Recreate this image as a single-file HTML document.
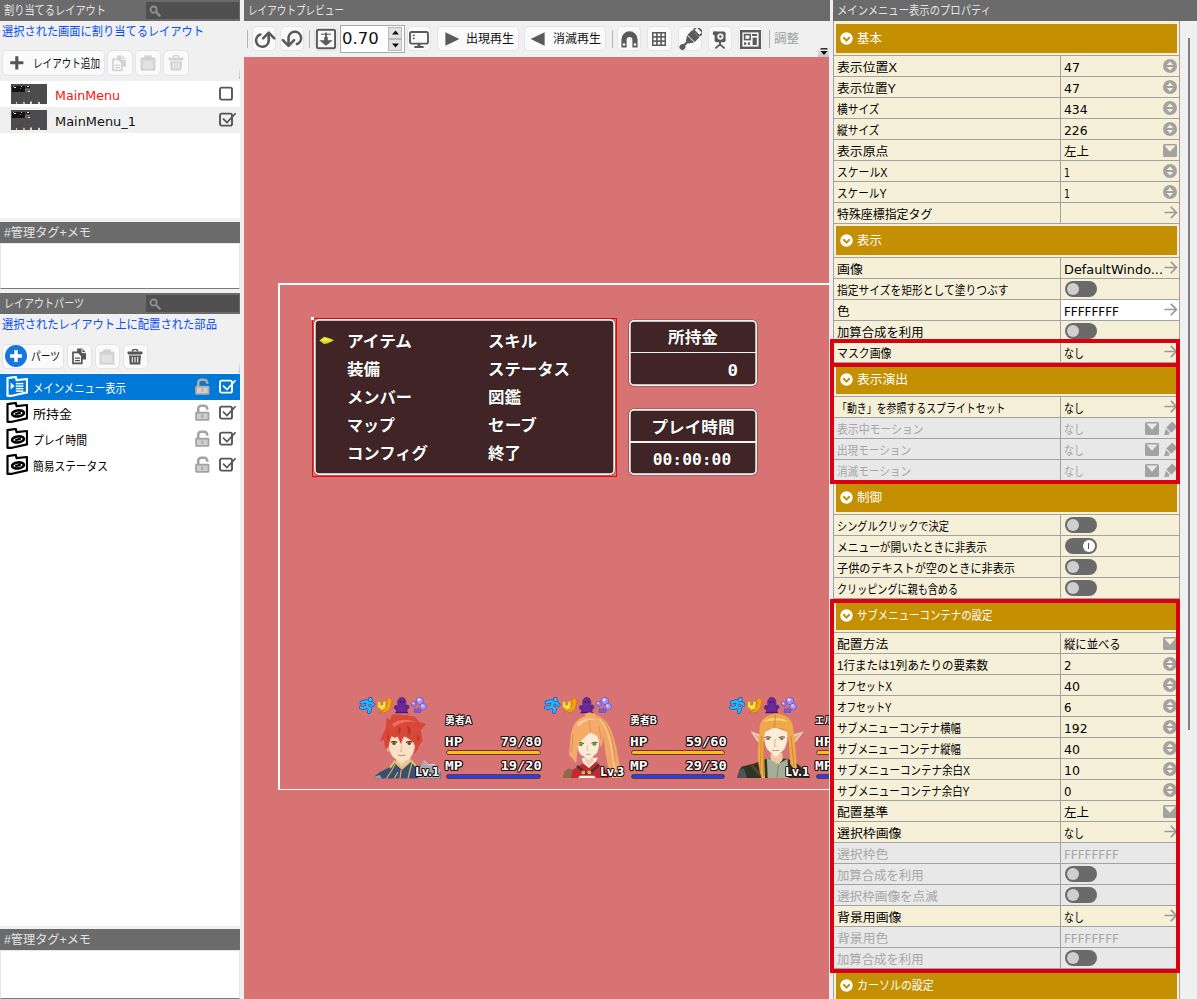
<!DOCTYPE html>
<html lang="ja"><head><meta charset="utf-8"><title>UI Layout Editor</title>
<style>
html,body{margin:0;padding:0}
body{width:1197px;height:999px;overflow:hidden;background:#f0f0f0;position:relative;font-family:"Liberation Sans","Noto Sans CJK JP",sans-serif;font-size:12px}
.r{position:absolute;display:block;box-sizing:border-box}
.t{position:absolute;display:block;white-space:nowrap;margin:0;padding:0}
.btn{position:absolute;box-sizing:border-box;background:#fafafa;border:1px solid #e4e4e4;border-radius:5px}
.clip{position:absolute;overflow:hidden}
</style></head>
<body>
<div class="r" style="left:0px;top:0px;width:240px;height:21px;background:#6b6b6b;"></div>
<span class="t" id="t0" style="top:1.3px;height:21px;line-height:21px;font-size:12px;color:#e4e4e4;left:4px;transform:scaleX(0.8499);transform-origin:0 50%;">割り当てるレイアウト</span>
<div class="r" style="left:146px;top:2px;width:93px;height:17px;background:#505050;"></div>
<svg class="r" style="left:148.5px;top:4.6px;" width="12" height="12" viewBox="0 0 12 12"><circle cx="4.6" cy="4.6" r="3.1" fill="none" stroke="#8e8e8e" stroke-width="1.8"/><path d="M7 7L10.6 10.6" stroke="#8e8e8e" stroke-width="2.2" stroke-linecap="round"/></svg>
<span class="t" id="t1" style="top:22.3px;height:21px;line-height:21px;font-size:12.5px;color:#0a50f0;left:2px;transform:scaleX(0.8977);transform-origin:0 50%;">選択された画面に割り当てるレイアウト</span>
<div class="btn" style="left:1.5px;top:50px;width:103.5px;height:26px"></div>
<svg class="r" style="left:10px;top:56px;" width="14" height="14" viewBox="0 0 14 14"><path d="M6.8 0.2V13.4M0.2 6.8H13.4" stroke="#555" stroke-width="3.1"/></svg>
<span class="t" id="t2" style="top:51.3px;height:26px;line-height:26px;font-size:12px;color:#111;left:33px;transform:scaleX(0.7975);transform-origin:0 50%;">レイアウト追加</span>
<div class="btn" style="left:107px;top:50px;width:26px;height:26px"></div>
<div class="btn" style="left:135px;top:50px;width:26px;height:26px"></div>
<div class="btn" style="left:163px;top:50px;width:26px;height:26px"></div>
<svg class="r" style="left:112px;top:55px;" width="15" height="17" viewBox="0 0 15 17"><path d="M5.2 0.6H10.2L14 4.4V11.4H5.2Z" fill="#d2d2d2"/><path d="M10 0.8V4.6H13.8" fill="none" stroke="#fafafa" stroke-width="1"/><path d="M1 4.4H6.6L9.8 7.6V15.4H1Z" fill="#fafafa" stroke="#d2d2d2" stroke-width="1.7"/><path d="M3 10.2H8M3 12.6H8" stroke="#d2d2d2" stroke-width="1.2"/></svg>
<svg class="r" style="left:140px;top:55px;" width="16" height="16" viewBox="0 0 16 16"><rect x="0.6" y="2.6" width="14.8" height="13" fill="#d2d2d2"/><rect x="4.2" y="0.4" width="7.6" height="4.4" fill="#d2d2d2"/><rect x="2.6" y="5.6" width="10.8" height="8.2" fill="#e2e2e2"/></svg>
<svg class="r" style="left:168px;top:55px;" width="16" height="16" viewBox="0 0 16 16"><path d="M5.4 2.2A2.6 2 0 0 1 10.6 2.2" fill="none" stroke="#d2d2d2" stroke-width="1.6"/><rect x="0.6" y="2.4" width="14.8" height="3" rx="0.8" fill="#d2d2d2"/><path d="M2 6.4H14L13.2 15.6H2.8Z" fill="#d2d2d2"/><path d="M5.3 8V13.6M8 8V13.6M10.7 8V13.6" stroke="#fafafa" stroke-width="1.1"/></svg>
<div class="r" style="left:239px;top:68px;width:1px;height:11px;background:linear-gradient(#ececec,#bdbdbd);"></div>
<div class="r" style="left:0px;top:81px;width:240px;height:137px;background:#fff;"></div>
<div class="r" style="left:0px;top:107px;width:240px;height:26px;background:#f0f0f0;"></div>
<div class="r" style="left:11px;top:84px;width:36px;height:20px;background:#4c4c4c;"></div><div class="r" style="left:12.4px;top:85.8px;width:12.2px;height:6px;background:#151213;"></div><div class="r" style="left:13.8px;top:86.8px;width:2px;height:1.2px;background:#e8e8e8;"></div><div class="r" style="left:12.8px;top:86px;width:1px;height:1px;background:#b8b820;"></div><div class="r" style="left:20.6px;top:86.2px;width:1.4px;height:1px;background:#c8c8c8;"></div><div class="r" style="left:19.6px;top:88.2px;width:1.2px;height:1px;background:#6a6a6a;"></div><div class="r" style="left:25.6px;top:85.8px;width:4.2px;height:2.2px;background:#151213;"></div><div class="r" style="left:26.6px;top:86px;width:2.2px;height:1px;background:#f0f0f0;"></div><div class="r" style="left:25.4px;top:88.6px;width:5px;height:3.4px;background:#565656;border:0.5px solid #6e6e6e;"></div><div class="r" style="left:28.4px;top:90.6px;width:1.6px;height:1px;background:#d8d8d8;"></div><div class="r" style="left:15.1px;top:100.8px;width:1.8px;height:1px;background:#a02848;"></div><div class="r" style="left:15.6px;top:101.8px;width:1.4px;height:2.2px;background:#f4dcc0;opacity:.85;"></div><div class="r" style="left:22.1px;top:100.8px;width:2.6px;height:1px;background:#3858a8;"></div><div class="r" style="left:22.6px;top:101.8px;width:2.2px;height:2.2px;background:#f0b898;opacity:.85;"></div><div class="r" style="left:29.9px;top:100.8px;width:1.8px;height:1px;background:#c89038;"></div><div class="r" style="left:30.4px;top:101.8px;width:1.4px;height:2.2px;background:#f8f0e4;opacity:.85;"></div><div class="r" style="left:37.1px;top:100.8px;width:2.8px;height:1px;background:#6848b0;"></div><div class="r" style="left:37.6px;top:101.8px;width:2.4px;height:2.2px;background:#f0ece0;opacity:.85;"></div>
<div class="r" style="left:11px;top:110px;width:36px;height:20px;background:#4c4c4c;"></div><div class="r" style="left:12.4px;top:111.8px;width:12.2px;height:6px;background:#151213;"></div><div class="r" style="left:13.8px;top:112.8px;width:2px;height:1.2px;background:#e8e8e8;"></div><div class="r" style="left:12.8px;top:112px;width:1px;height:1px;background:#b8b820;"></div><div class="r" style="left:20.6px;top:112.2px;width:1.4px;height:1px;background:#c8c8c8;"></div><div class="r" style="left:19.6px;top:114.2px;width:1.2px;height:1px;background:#6a6a6a;"></div><div class="r" style="left:25.6px;top:111.8px;width:4.2px;height:2.2px;background:#151213;"></div><div class="r" style="left:26.6px;top:112px;width:2.2px;height:1px;background:#f0f0f0;"></div><div class="r" style="left:25.4px;top:114.6px;width:5px;height:3.4px;background:#565656;border:0.5px solid #6e6e6e;"></div><div class="r" style="left:28.4px;top:116.6px;width:1.6px;height:1px;background:#d8d8d8;"></div><div class="r" style="left:15.1px;top:126.8px;width:1.8px;height:1px;background:#a02848;"></div><div class="r" style="left:15.6px;top:127.8px;width:1.4px;height:2.2px;background:#f4dcc0;opacity:.85;"></div><div class="r" style="left:22.1px;top:126.8px;width:2.6px;height:1px;background:#3858a8;"></div><div class="r" style="left:22.6px;top:127.8px;width:2.2px;height:2.2px;background:#f0b898;opacity:.85;"></div><div class="r" style="left:29.9px;top:126.8px;width:1.8px;height:1px;background:#c89038;"></div><div class="r" style="left:30.4px;top:127.8px;width:1.4px;height:2.2px;background:#f8f0e4;opacity:.85;"></div><div class="r" style="left:37.1px;top:126.8px;width:2.8px;height:1px;background:#6848b0;"></div><div class="r" style="left:37.6px;top:127.8px;width:2.4px;height:2.2px;background:#f0ece0;opacity:.85;"></div>
<span class="t" id="t3" style="top:82px;height:27px;line-height:27px;font-size:12.5px;color:#ff1010;font-family:'DejaVu Sans','Noto Sans CJK JP',sans-serif;left:55px;transform:scaleX(1.0129);transform-origin:0 50%;">MainMenu</span>
<span class="t" id="t4" style="top:108px;height:27px;line-height:27px;font-size:12.5px;color:#111;font-family:'DejaVu Sans','Noto Sans CJK JP',sans-serif;left:55px;transform:scaleX(1.0335);transform-origin:0 50%;">MainMenu_1</span>
<svg class="r" style="left:219px;top:86.3px;" width="18" height="15" viewBox="0 0 18 15"><rect x="1" y="1.6" width="12" height="12" rx="1.6" fill="none" stroke="#555" stroke-width="1.9"/></svg>
<svg class="r" style="left:219px;top:112.3px;" width="18" height="15" viewBox="0 0 18 15"><rect x="1" y="1.6" width="12" height="12" rx="1.6" fill="none" stroke="#555" stroke-width="1.9"/><path d="M4 6.6L8 10.6L16.6 1.2" fill="none" stroke="#555" stroke-width="1.7"/></svg>
<div class="r" style="left:0px;top:222px;width:240px;height:21px;background:#6b6b6b;"></div>
<span class="t" id="t5" style="top:223.3px;height:21px;line-height:21px;font-size:12px;color:#e4e4e4;left:4px;transform:scaleX(1.0153);transform-origin:0 50%;">#管理タグ+メモ</span>
<div class="r" style="left:0px;top:243px;width:240px;height:46px;background:#fff;border:1px solid #e6e6e6;border-bottom:1px solid #7a7a7a;"></div>
<div class="r" style="left:0px;top:293px;width:240px;height:21px;background:#6b6b6b;"></div>
<span class="t" id="t6" style="top:294.3px;height:21px;line-height:21px;font-size:12px;color:#e4e4e4;left:4px;transform:scaleX(0.8354);transform-origin:0 50%;">レイアウトパーツ</span>
<div class="r" style="left:146px;top:295px;width:93px;height:17px;background:#505050;"></div>
<svg class="r" style="left:148.5px;top:297.6px;" width="12" height="12" viewBox="0 0 12 12"><circle cx="4.6" cy="4.6" r="3.1" fill="none" stroke="#8e8e8e" stroke-width="1.8"/><path d="M7 7L10.6 10.6" stroke="#8e8e8e" stroke-width="2.2" stroke-linecap="round"/></svg>
<span class="t" id="t7" style="top:315.3px;height:21px;line-height:21px;font-size:12.5px;color:#0a50f0;left:2px;transform:scaleX(0.9052);transform-origin:0 50%;">選択されたレイアウト上に配置された部品</span>
<div class="btn" style="left:1.5px;top:343.5px;width:62px;height:25.5px"></div>
<svg class="r" style="left:5px;top:345px;" width="22" height="22" viewBox="0 0 22 22"><circle cx="11" cy="11" r="11" fill="#1478e0"/><path d="M11 5V17M5 11H17" stroke="#fff" stroke-width="3.4"/></svg>
<span class="t" id="t8" style="top:345.3px;height:25px;line-height:25px;font-size:12px;color:#111;left:31px;transform:scaleX(0.8108);transform-origin:0 50%;">パーツ</span>
<div class="btn" style="left:67px;top:344px;width:25px;height:25px"></div>
<div class="btn" style="left:95px;top:344px;width:25px;height:25px"></div>
<div class="btn" style="left:123px;top:344px;width:25px;height:25px"></div>
<svg class="r" style="left:71.5px;top:348px;" width="15" height="17" viewBox="0 0 15 17"><path d="M5.2 0.6H10.2L14 4.4V11.4H5.2Z" fill="#555"/><path d="M10 0.8V4.6H13.8" fill="none" stroke="#fafafa" stroke-width="1"/><path d="M1 4.4H6.6L9.8 7.6V15.4H1Z" fill="#fafafa" stroke="#555" stroke-width="1.7"/><path d="M3 10.2H8M3 12.6H8" stroke="#555" stroke-width="1.2"/></svg>
<svg class="r" style="left:99px;top:348.5px;" width="16" height="16" viewBox="0 0 16 16"><rect x="0.6" y="2.6" width="14.8" height="13" fill="#d2d2d2"/><rect x="4.2" y="0.4" width="7.6" height="4.4" fill="#d2d2d2"/><rect x="2.6" y="5.6" width="10.8" height="8.2" fill="#e2e2e2"/></svg>
<svg class="r" style="left:127px;top:348.5px;" width="16" height="16" viewBox="0 0 16 16"><path d="M5.4 2.2A2.6 2 0 0 1 10.6 2.2" fill="none" stroke="#555" stroke-width="1.6"/><rect x="0.6" y="2.4" width="14.8" height="3" rx="0.8" fill="#555"/><path d="M2 6.4H14L13.2 15.6H2.8Z" fill="#555"/><path d="M5.3 8V13.6M8 8V13.6M10.7 8V13.6" stroke="#fafafa" stroke-width="1.1"/></svg>
<div class="r" style="left:239px;top:362px;width:1px;height:11px;background:linear-gradient(#ececec,#bdbdbd);"></div>
<div class="r" style="left:0px;top:373px;width:240px;height:553px;background:#fff;"></div>
<div class="r" style="left:0px;top:374px;width:240px;height:26px;background:#0078d7;"></div>
<svg class="r" style="left:6px;top:376px;" width="22" height="21" viewBox="0 0 22 21"><path d="M1.5 2.2L9.8 0.9L10.6 4.2L21 3V16.4L6 19.8H1.5Z" fill="none" stroke="#fff" stroke-width="2.2" stroke-linejoin="round"/><path d="M4.6 6.6V13.6L8.6 10.1Z" fill="#fff"/><path d="M9.8 7.6 H17.4" stroke="#fff" stroke-width="1.5"/><path d="M9.8 10.1 H17.4" stroke="#fff" stroke-width="1.5"/><path d="M9.8 12.6 H17.4" stroke="#fff" stroke-width="1.5"/><path d="M9.8 15.1 H17.4" stroke="#fff" stroke-width="1.5"/></svg>
<span class="t" id="t9" style="top:376.3px;height:26px;line-height:26px;font-size:12.5px;color:#fff;left:33px;transform:scaleX(0.8293);transform-origin:0 50%;">メインメニュー表示</span>
<svg class="r" style="left:194.6px;top:377.6px;" width="15" height="18" viewBox="0 0 15 18"><path d="M3.2 8V4.8A3 3 0 0 1 6.2 1.8H9.2A3 3 0 0 1 12.2 4.8V5.8" fill="none" stroke="#b4aaa2" stroke-width="2.6"/><rect x="0.2" y="7.8" width="14.2" height="9" rx="1.2" fill="#b4aaa2"/><rect x="2" y="9.6" width="10.6" height="5.4" fill="#cfcfcf"/><rect x="6.4" y="10.6" width="1.8" height="3.2" fill="#b4aaa2"/></svg>
<svg class="r" style="left:219px;top:378.8px;" width="18" height="15" viewBox="0 0 18 15"><rect x="1" y="1.6" width="12" height="12" rx="1.6" fill="none" stroke="#fff" stroke-width="1.9"/><path d="M4 6.6L8 10.6L16.6 1.2" fill="none" stroke="#fff" stroke-width="1.7"/></svg>
<svg class="r" style="left:6px;top:402px;" width="22" height="21" viewBox="0 0 22 21"><path d="M1.5 2.2L9.8 0.9L10.6 4.2L21 3V16.4L6 19.8H1.5Z" fill="none" stroke="#000" stroke-width="2.2" stroke-linejoin="round"/><ellipse cx="12" cy="11.4" rx="6" ry="3" fill="none" stroke="#000" stroke-width="2.6" transform="rotate(-7 12 11.4)"/><path d="M9.2 12.2L14.8 10.6" stroke="#000" stroke-width="2.2"/></svg>
<span class="t" id="t10" style="top:402.3px;height:26px;line-height:26px;font-size:12.5px;color:#000;left:33px;transform:scaleX(1.0396);transform-origin:0 50%;">所持金</span>
<svg class="r" style="left:194.6px;top:403.6px;" width="15" height="18" viewBox="0 0 15 18"><path d="M3.2 8V4.8A3 3 0 0 1 6.2 1.8H9.2A3 3 0 0 1 12.2 4.8V5.8" fill="none" stroke="#a3a3a3" stroke-width="2.6"/><rect x="0.2" y="7.8" width="14.2" height="9" rx="1.2" fill="#a3a3a3"/><rect x="2" y="9.6" width="10.6" height="5.4" fill="#cfcfcf"/><rect x="6.4" y="10.6" width="1.8" height="3.2" fill="#a3a3a3"/></svg>
<svg class="r" style="left:219px;top:404.8px;" width="18" height="15" viewBox="0 0 18 15"><rect x="1" y="1.6" width="12" height="12" rx="1.6" fill="none" stroke="#555" stroke-width="1.9"/><path d="M4 6.6L8 10.6L16.6 1.2" fill="none" stroke="#555" stroke-width="1.7"/></svg>
<svg class="r" style="left:6px;top:428px;" width="22" height="21" viewBox="0 0 22 21"><path d="M1.5 2.2L9.8 0.9L10.6 4.2L21 3V16.4L6 19.8H1.5Z" fill="none" stroke="#000" stroke-width="2.2" stroke-linejoin="round"/><ellipse cx="12" cy="11.4" rx="6" ry="3" fill="none" stroke="#000" stroke-width="2.6" transform="rotate(-7 12 11.4)"/><path d="M9.2 12.2L14.8 10.6" stroke="#000" stroke-width="2.2"/></svg>
<span class="t" id="t11" style="top:428.3px;height:26px;line-height:26px;font-size:12.5px;color:#000;left:33px;transform:scaleX(0.8638);transform-origin:0 50%;">プレイ時間</span>
<svg class="r" style="left:194.6px;top:429.6px;" width="15" height="18" viewBox="0 0 15 18"><path d="M3.2 8V4.8A3 3 0 0 1 6.2 1.8H9.2A3 3 0 0 1 12.2 4.8V5.8" fill="none" stroke="#a3a3a3" stroke-width="2.6"/><rect x="0.2" y="7.8" width="14.2" height="9" rx="1.2" fill="#a3a3a3"/><rect x="2" y="9.6" width="10.6" height="5.4" fill="#cfcfcf"/><rect x="6.4" y="10.6" width="1.8" height="3.2" fill="#a3a3a3"/></svg>
<svg class="r" style="left:219px;top:430.8px;" width="18" height="15" viewBox="0 0 18 15"><rect x="1" y="1.6" width="12" height="12" rx="1.6" fill="none" stroke="#555" stroke-width="1.9"/><path d="M4 6.6L8 10.6L16.6 1.2" fill="none" stroke="#555" stroke-width="1.7"/></svg>
<svg class="r" style="left:6px;top:454px;" width="22" height="21" viewBox="0 0 22 21"><path d="M1.5 2.2L9.8 0.9L10.6 4.2L21 3V16.4L6 19.8H1.5Z" fill="none" stroke="#000" stroke-width="2.2" stroke-linejoin="round"/><ellipse cx="12" cy="11.4" rx="6" ry="3" fill="none" stroke="#000" stroke-width="2.6" transform="rotate(-7 12 11.4)"/><path d="M9.2 12.2L14.8 10.6" stroke="#000" stroke-width="2.2"/></svg>
<span class="t" id="t12" style="top:454.3px;height:26px;line-height:26px;font-size:12.5px;color:#000;left:33px;transform:scaleX(0.8570);transform-origin:0 50%;">簡易ステータス</span>
<svg class="r" style="left:194.6px;top:455.6px;" width="15" height="18" viewBox="0 0 15 18"><path d="M3.2 8V4.8A3 3 0 0 1 6.2 1.8H9.2A3 3 0 0 1 12.2 4.8V5.8" fill="none" stroke="#a3a3a3" stroke-width="2.6"/><rect x="0.2" y="7.8" width="14.2" height="9" rx="1.2" fill="#a3a3a3"/><rect x="2" y="9.6" width="10.6" height="5.4" fill="#cfcfcf"/><rect x="6.4" y="10.6" width="1.8" height="3.2" fill="#a3a3a3"/></svg>
<svg class="r" style="left:219px;top:456.8px;" width="18" height="15" viewBox="0 0 18 15"><rect x="1" y="1.6" width="12" height="12" rx="1.6" fill="none" stroke="#555" stroke-width="1.9"/><path d="M4 6.6L8 10.6L16.6 1.2" fill="none" stroke="#555" stroke-width="1.7"/></svg>
<div class="r" style="left:0px;top:929px;width:240px;height:21px;background:#6b6b6b;"></div>
<span class="t" id="t13" style="top:930.3px;height:21px;line-height:21px;font-size:12px;color:#e4e4e4;left:4px;transform:scaleX(1.0153);transform-origin:0 50%;">#管理タグ+メモ</span>
<div class="r" style="left:0px;top:950px;width:240px;height:49px;background:#fff;border:1px solid #e6e6e6;border-bottom:1px solid #7a7a7a;"></div><div class="r" style="left:244px;top:0px;width:586px;height:21px;background:#6b6b6b;"></div>
<span class="t" id="t14" style="top:1.3px;height:21px;line-height:21px;font-size:12px;color:#e4e4e4;left:248px;transform:scaleX(0.7999);transform-origin:0 50%;">レイアウトプレビュー</span>
<div class="r" style="left:247px;top:30px;width:1px;height:18px;background:#b4b4b4;"></div>
<div class="btn" style="left:252px;top:26px;width:24px;height:25px"></div>
<div class="btn" style="left:280px;top:26px;width:24px;height:25px"></div>
<svg class="r" style="left:250px;top:24px;" width="30" height="30" viewBox="250 24 30 30"><path d="M260.3 34.5A6.3 6.3 0 1 0 268.7 40.6V33.6" fill="none" stroke="#5a5a5a" stroke-width="2.6" stroke-linecap="round"/><path d="M263.1 38.3L268.7 32.7L274.3 38.3" fill="none" stroke="#5a5a5a" stroke-width="2.6" stroke-linecap="round" stroke-linejoin="round"/></svg>
<svg class="r" style="left:277px;top:23.2px;" width="30" height="30" viewBox="250.2 24.1 30 30"><g transform="rotate(180 265.2 39.8)"><path d="M260.3 34.5A6.3 6.3 0 1 0 268.7 40.6V33.6" fill="none" stroke="#5a5a5a" stroke-width="2.6" stroke-linecap="round"/><path d="M263.1 38.3L268.7 32.7L274.3 38.3" fill="none" stroke="#5a5a5a" stroke-width="2.6" stroke-linecap="round" stroke-linejoin="round"/></g></svg>
<div class="r" style="left:309px;top:30px;width:1px;height:18px;background:#b4b4b4;"></div>
<div class="btn" style="left:314px;top:26px;width:24px;height:25px"></div>
<svg class="r" style="left:315px;top:28px;" width="22" height="22" viewBox="315 28 22 22"><rect x="316.9" y="29.8" width="18.2" height="18.4" rx="1.6" fill="none" stroke="#5a5a5a" stroke-width="2"/><path d="M321 34.2H331" stroke="#5a5a5a" stroke-width="1.1"/><path d="M326 32.4V38" stroke="#5a5a5a" stroke-width="1.8"/><path d="M326 37V41" stroke="#5a5a5a" stroke-width="3.6"/><path d="M319.2 40.2H332.8L326 45.8Z" fill="#5a5a5a"/></svg>
<div class="r" style="left:340px;top:25px;width:65px;height:28px;background:#fff;border:1px solid #a8a8a8;"></div>
<span class="t" id="t15" style="top:25px;height:28px;line-height:28px;font-size:16.5px;color:#111;font-family:'DejaVu Sans','Noto Sans CJK JP',sans-serif;left:341.6px;transform:scaleX(0.9986);transform-origin:0 50%;">0.70</span>
<div class="r" style="left:388px;top:27px;width:14px;height:11.5px;background:#e2e2e2;border:1px solid #b8b8b8;"></div>
<div class="r" style="left:388px;top:39px;width:14px;height:11.5px;background:#e2e2e2;border:1px solid #b8b8b8;"></div>
<svg class="r" style="left:391.5px;top:30px;" width="7" height="5" viewBox="0 0 7 5"><path d="M0 4.6L3.5 0.4L7 4.6Z" fill="#111"/></svg>
<svg class="r" style="left:391.5px;top:42.5px;" width="7" height="5" viewBox="0 0 7 5"><path d="M0 0.4L3.5 4.6L7 0.4Z" fill="#111"/></svg>
<div class="btn" style="left:407px;top:26px;width:24px;height:25px"></div>
<svg class="r" style="left:409px;top:30.5px;" width="20" height="18" viewBox="0 0 20 18"><rect x="1" y="1" width="18" height="11.6" rx="1.6" fill="none" stroke="#5a5a5a" stroke-width="1.9"/><path d="M10 12.6V15" stroke="#5a5a5a" stroke-width="3"/><path d="M5.4 16H14.6" stroke="#5a5a5a" stroke-width="2"/><rect x="3.8" y="3.6" width="1.8" height="1.6" fill="#5a5a5a"/><rect x="3.8" y="6.6" width="1.8" height="1.6" fill="#5a5a5a"/></svg>
<div class="btn" style="left:436.5px;top:26px;width:82px;height:25px"></div>
<svg class="r" style="left:445px;top:32px;" width="15" height="14" viewBox="0 0 15 14"><path d="M0.4 0.2L14.4 7L0.4 13.8Z" fill="#5a5a5a"/></svg>
<span class="t" id="t16" style="top:27.3px;height:25px;line-height:25px;font-size:12px;color:#111;left:466px;transform:scaleX(0.9997);transform-origin:0 50%;">出現再生</span>
<div class="btn" style="left:523.5px;top:26px;width:82px;height:25px"></div>
<svg class="r" style="left:530px;top:32px;" width="15" height="14" viewBox="0 0 15 14"><path d="M14.6 0.2L0.6 7L14.6 13.8Z" fill="#5a5a5a"/></svg>
<span class="t" id="t17" style="top:27.3px;height:25px;line-height:25px;font-size:12px;color:#111;left:553px;transform:scaleX(0.9997);transform-origin:0 50%;">消滅再生</span>
<div class="r" style="left:612px;top:30px;width:1px;height:18px;background:#b4b4b4;"></div>
<div class="btn" style="left:616.5px;top:26px;width:24.5px;height:25px"></div>
<svg class="r" style="left:620.5px;top:30.5px;" width="17" height="17" viewBox="0 0 17 17"><path d="M0.4 16.4V8.4A8.1 8.1 0 0 1 16.6 8.4V16.4H11.4V9A2.9 2.9 0 0 0 5.6 9V16.4Z" fill="#5a5a5a"/><rect x="1.8" y="12.4" width="2.4" height="2.2" fill="#fafafa"/><rect x="12.8" y="12.4" width="2.4" height="2.2" fill="#fafafa"/></svg>
<div class="btn" style="left:647px;top:26px;width:24.5px;height:25px"></div>
<svg class="r" style="left:652px;top:32px;" width="14" height="14" viewBox="0 0 14 14"><rect x="0" y="0" width="14" height="14" fill="#5a5a5a"/><rect x="1.5" y="1.5" width="2.6" height="2.6" fill="#fafafa"/><rect x="1.5" y="5.7" width="2.6" height="2.6" fill="#fafafa"/><rect x="1.5" y="9.9" width="2.6" height="2.6" fill="#fafafa"/><rect x="5.7" y="1.5" width="2.6" height="2.6" fill="#fafafa"/><rect x="5.7" y="5.7" width="2.6" height="2.6" fill="#fafafa"/><rect x="5.7" y="9.9" width="2.6" height="2.6" fill="#fafafa"/><rect x="9.9" y="1.5" width="2.6" height="2.6" fill="#fafafa"/><rect x="9.9" y="5.7" width="2.6" height="2.6" fill="#fafafa"/><rect x="9.9" y="9.9" width="2.6" height="2.6" fill="#fafafa"/></svg>
<div class="btn" style="left:677.5px;top:26px;width:24.5px;height:25px"></div>
<svg class="r" style="left:679px;top:28px;" width="23" height="22" viewBox="0 0 23 22"><g transform="rotate(45 11.5 11)"><rect x="7.3" y="-2.4" width="8.4" height="5" rx="1.2" fill="none" stroke="#5a5a5a" stroke-width="1.7"/><rect x="6.4" y="3.4" width="10.2" height="6.6" fill="#5a5a5a"/><path d="M6.4 10.8H16.6L13.4 15.6H9.6Z" fill="#5a5a5a"/><path d="M11.5 15V21" stroke="#5a5a5a" stroke-width="2.2"/><circle cx="11.5" cy="22.4" r="2.9" fill="#5a5a5a"/></g></svg>
<div class="btn" style="left:707.5px;top:26px;width:24.5px;height:25px"></div>
<svg class="r" style="left:713px;top:30.5px;" width="13" height="18" viewBox="0 0 13 18"><rect x="1.6" y="0.4" width="11" height="10.8" rx="2" fill="#5a5a5a"/><rect x="0" y="0.4" width="3.6" height="3.6" fill="#5a5a5a"/><circle cx="7.4" cy="5.6" r="3.1" fill="#fafafa"/><circle cx="7.4" cy="5.6" r="1.3" fill="#5a5a5a"/><path d="M7 11V13.6M7 13.4L2.4 17.4M7 13.4L11.6 17.4" stroke="#5a5a5a" stroke-width="1.9" fill="none"/></svg>
<div class="btn" style="left:737.5px;top:26px;width:25px;height:25px"></div>
<svg class="r" style="left:740px;top:30px;" width="21" height="19" viewBox="0 0 21 19"><rect x="1.2" y="1.2" width="18.6" height="16.6" fill="none" stroke="#5a5a5a" stroke-width="2.4"/><rect x="4.6" y="4.6" width="5.6" height="5" fill="none" stroke="#5a5a5a" stroke-width="1.6"/><rect x="12" y="4" width="5" height="2" fill="#5a5a5a"/><rect x="12.6" y="7.6" width="4.2" height="7.4" fill="#5a5a5a"/><rect x="4" y="12.4" width="2.2" height="2.4" fill="#5a5a5a"/><rect x="7.8" y="12.4" width="2.2" height="2.4" fill="#5a5a5a"/></svg>
<div class="r" style="left:768.5px;top:30px;width:1px;height:18px;background:#b4b4b4;"></div>
<span class="t" id="t18" style="top:27.3px;height:25px;line-height:25px;font-size:12px;color:#a0a0a0;left:774px;transform:scaleX(1.0410);transform-origin:0 50%;">調整</span>
<div class="r" style="left:818px;top:46px;width:11px;height:11px;background:linear-gradient(#f4f4f4,#c4c4c4);"></div>
<svg class="r" style="left:820px;top:48px;" width="8" height="8" viewBox="0 0 8 8"><path d="M0.6 0.8H7.4" stroke="#111" stroke-width="1.3"/><path d="M0.4 3L4 7L7.6 3Z" fill="#111"/></svg>
<div class="clip" style="left:244px;top:57px;width:585px;height:942px;background:#d87373">
<div style="position:absolute;left:-244px;top:-57px;width:1197px;height:999px">
<div class="r" style="left:278px;top:283px;width:900px;height:507px;background:transparent;border:2px solid #fff;border-bottom-width:1.2px;"></div>
<div class="r" style="left:312px;top:318px;width:305px;height:158.6px;background:transparent;border:1px solid #f00;"></div>
<div class="r" style="left:311px;top:317px;width:3px;height:3px;background:#fff;"></div>
<div class="r" style="left:313.6px;top:319.4px;width:301.4px;height:155.8px;background:#402426;border-radius:5px;box-shadow:inset 0 0 0 1.7px #f6f6f6,0 0 0 0.6px rgba(60,30,30,.55)"></div>
<svg class="r" style="left:319px;top:336px;" width="16" height="9" viewBox="0 0 16 9"><path d="M0.4 4.4L5 0.8C9 1.6 12.4 3 14.8 4.4C12.4 5.8 9 7.4 5 8L0.4 4.4Z" fill="#d8dc20"/><path d="M2 4.4L5.4 2.2C8 2.6 10.4 3.4 12.4 4.4Z" fill="#f4f860"/></svg>
<span class="t" id="t19" style="top:329px;height:24px;line-height:24px;font-size:16.2px;color:#fff;font-family:'Liberation Sans','Noto Sans CJK JP',sans-serif;font-weight:700;left:346.6px;transform:scaleX(1.0294);transform-origin:0 50%;text-shadow:0 0 1px rgba(0,0,0,.7);">アイテム</span>
<span class="t" id="t20" style="top:357px;height:24px;line-height:24px;font-size:16.2px;color:#fff;font-family:'Liberation Sans','Noto Sans CJK JP',sans-serif;font-weight:700;left:346.6px;transform:scaleX(1.0193);transform-origin:0 50%;text-shadow:0 0 1px rgba(0,0,0,.7);">装備</span>
<span class="t" id="t21" style="top:385px;height:24px;line-height:24px;font-size:16.2px;color:#fff;font-family:'Liberation Sans','Noto Sans CJK JP',sans-serif;font-weight:700;left:346.6px;transform:scaleX(1.0039);transform-origin:0 50%;text-shadow:0 0 1px rgba(0,0,0,.7);">メンバー</span>
<span class="t" id="t22" style="top:413px;height:24px;line-height:24px;font-size:16.2px;color:#fff;font-family:'Liberation Sans','Noto Sans CJK JP',sans-serif;font-weight:700;left:346.6px;transform:scaleX(0.9884);transform-origin:0 50%;text-shadow:0 0 1px rgba(0,0,0,.7);">マップ</span>
<span class="t" id="t23" style="top:441px;height:24px;line-height:24px;font-size:16.2px;color:#fff;font-family:'Liberation Sans','Noto Sans CJK JP',sans-serif;font-weight:700;left:346.6px;transform:scaleX(1.0107);transform-origin:0 50%;text-shadow:0 0 1px rgba(0,0,0,.7);">コンフィグ</span>
<span class="t" id="t24" style="top:329px;height:24px;line-height:24px;font-size:16.2px;color:#fff;font-family:'Liberation Sans','Noto Sans CJK JP',sans-serif;font-weight:700;left:488px;transform:scaleX(1.0090);transform-origin:0 50%;text-shadow:0 0 1px rgba(0,0,0,.7);">スキル</span>
<span class="t" id="t25" style="top:357px;height:24px;line-height:24px;font-size:16.2px;color:#fff;font-family:'Liberation Sans','Noto Sans CJK JP',sans-serif;font-weight:700;left:488px;transform:scaleX(1.0131);transform-origin:0 50%;text-shadow:0 0 1px rgba(0,0,0,.7);">ステータス</span>
<span class="t" id="t26" style="top:385px;height:24px;line-height:24px;font-size:16.2px;color:#fff;font-family:'Liberation Sans','Noto Sans CJK JP',sans-serif;font-weight:700;left:488px;transform:scaleX(1.0193);transform-origin:0 50%;text-shadow:0 0 1px rgba(0,0,0,.7);">図鑑</span>
<span class="t" id="t27" style="top:413px;height:24px;line-height:24px;font-size:16.2px;color:#fff;font-family:'Liberation Sans','Noto Sans CJK JP',sans-serif;font-weight:700;left:488px;transform:scaleX(1.0295);transform-origin:0 50%;text-shadow:0 0 1px rgba(0,0,0,.7);">セーブ</span>
<span class="t" id="t28" style="top:441px;height:24px;line-height:24px;font-size:16.2px;color:#fff;font-family:'Liberation Sans','Noto Sans CJK JP',sans-serif;font-weight:700;left:488px;transform:scaleX(1.0193);transform-origin:0 50%;text-shadow:0 0 1px rgba(0,0,0,.7);">終了</span>
<div class="r" style="left:628.8px;top:319.6px;width:127.8px;height:66px;background:#402426;border-radius:5px;box-shadow:inset 0 0 0 1.7px #f6f6f6,0 0 0 0.6px rgba(60,30,30,.55)"></div><div class="r" style="left:629.8px;top:351.9px;width:125.8px;height:1.4px;background:#f4f4f4;"></div>
<span class="t" id="t29" style="top:325px;height:24px;line-height:24px;font-size:16.2px;color:#fff;font-family:'Liberation Sans','Noto Sans CJK JP',sans-serif;font-weight:700;left:692.5px;transform:translateX(-50%) scaleX(1.0296);text-shadow:0 0 1px rgba(0,0,0,.7);">所持金</span>
<span class="t" id="t30" style="top:359px;height:24px;line-height:24px;font-size:16.5px;color:#fff;font-family:'DejaVu Sans Mono','Liberation Mono',monospace;font-weight:700;right:459.5px;transform:scaleX(1.0566);transform-origin:100% 50%;text-shadow:0 0 1px rgba(0,0,0,.7);">0</span>
<div class="r" style="left:628.8px;top:408.8px;width:127.8px;height:66.4px;background:#402426;border-radius:5px;box-shadow:inset 0 0 0 1.7px #f6f6f6,0 0 0 0.6px rgba(60,30,30,.55)"></div><div class="r" style="left:629.8px;top:441.2px;width:125.8px;height:1.4px;background:#f4f4f4;"></div>
<span class="t" id="t31" style="top:414.5px;height:24px;line-height:24px;font-size:16.2px;color:#fff;font-family:'Liberation Sans','Noto Sans CJK JP',sans-serif;font-weight:700;left:692.5px;transform:translateX(-50%) scaleX(1.0255);text-shadow:0 0 1px rgba(0,0,0,.7);">プレイ時間</span>
<span class="t" id="t32" style="top:448.3px;height:24px;line-height:24px;font-size:16.5px;color:#fff;font-family:'DejaVu Sans Mono','Liberation Mono',monospace;font-weight:700;left:692.3px;transform:translateX(-50%) scaleX(0.9876);text-shadow:0 0 1px rgba(0,0,0,.7);">00:00:00</span>
<svg class="r" style="left:360.4px;top:697px;overflow:visible;" width="68" height="16.5" viewBox="0 0 68 16.5"><g stroke-linecap="round" stroke-linejoin="round" fill="none"><path d="M1.6 5.4L6.4 4.2L10.2 5.2L13.4 7.6M8.2 5L6.6 9.6L10 11.6L9 15M6.6 9.6L3.6 11L1 10.4" stroke="#0a58c8" stroke-width="4"/><path d="M1.6 5.4L6.4 4.2L10.2 5.2L13.4 7.6M8.2 5L6.6 9.6L10 11.6L9 15M6.6 9.6L3.6 11L1 10.4" stroke="#28b8f8" stroke-width="2.6"/></g><circle cx="10.4" cy="2.4" r="2.3" fill="#0a58c8"/><circle cx="10.4" cy="2.4" r="1.5" fill="#48d0ff"/><g transform="translate(16.8 0)"><path d="M2 15.4C8 14.6 10 10 10.4 5L8.6 5.2L12.4 0.2L16.2 5L14.6 4.8C14.6 11 12 15.6 5 16Z" fill="#f8a010" stroke="#c07008" stroke-width=".6"/><path d="M0.8 4.6H3.8V8H5.8L6.4 4.200H9.400L8.800 11.600L4.400 13.400L3 11.200L0.800 10.800Z" fill="#f8e040" stroke="#b89010" stroke-width=".6"/></g><g transform="translate(33.6 0)" fill="#6a2a98" stroke="#451870" stroke-width=".6"><circle cx="2.6" cy="10.400" r="1.9"/><circle cx="13.6" cy="10" r="1.9"/><path d="M3.2 15.400C2 12.600 4 10 4.400 8C3.200 3.600 5.200 0.400 8.200 0.400S13.200 3.600 12 8C12.400 10 14.400 12.600 13.200 15.400Z"/><path d="M1.800 15.600H14.400" stroke-width="1.3" stroke="#451870"/></g><circle cx="40.4" cy="5" r=".8" fill="#2a0c48"/><circle cx="43.2" cy="5" r=".8" fill="#2a0c48"/><g transform="translate(50.4 0)" stroke="#5a44c0" stroke-width=".6"><circle cx="9.600" cy="4" r="3.7" fill="#a48cf4"/><circle cx="12.800" cy="9.600" r="3.3" fill="#a890f8"/><circle cx="3.400" cy="7" r="2.5" fill="#9c84f0"/><path d="M3.600 15.400L4.200 11.400L6.200 13.200L7.600 10.800L9 13.200L10.600 12L10.400 15.400Z" fill="#7c5ce0"/></g><circle cx="59" cy="2.800" r="1.5" fill="#ece4ff"/><circle cx="62.400" cy="8.600" r="1.2" fill="#e4dcff"/><circle cx="53.200" cy="6.200" r=".9" fill="#e4dcff"/></svg><svg class="r" style="left:374px;top:712px;overflow:visible;" width="67" height="66.4" viewBox="0 0 67 66.4"><defs><clipPath id="fc0"><rect x="-10" y="-2" width="90" height="68.400"/></clipPath></defs><g clip-path="url(#fc0)"><path d="M0 67L1 64L6 60L14 56L21 51L28 58L37 50L44 54L50 53L67 60V67Z" fill="#3a4e74"/><path d="M0 67L1 64.500L6 63L8 67Z" fill="#9aa0a8"/><path d="M46 55L50 48.500L54 53L61 52.500L66.500 58V67H44Z" fill="#a4a8b0"/><path d="M50 48.500L54 53L61 52.500" fill="none" stroke="#d8dce0" stroke-width="1"/><path d="M12 67L18 58L21 52M26 67L27 58M34 67L36 58L38 51M20 67L24 60" fill="none" stroke="#c8b058" stroke-width="1.3"/><path d="M16 56L20.500 49.500L28 56.500L37 48.500L42 54" fill="none" stroke="#d8c468" stroke-width="2"/><path d="M22 45L22 50L28 55.500L36 49L36.500 44Z" fill="#f0c8a0"/><path d="M14.500 26C13.500 34 15 40 19 45L27.500 51.500L36 46C40 41 41.500 34 41.500 26L28 20Z" fill="#fae0c4"/><path d="M13.500 34.500C12 34 12 38.500 14.800 40Z" fill="#f0c8a0"/><path d="M28 33L26.600 39.500L28.400 39.800" fill="none" stroke="#d8a888" stroke-width=".8"/><path d="M24 43.200Q27.500 44.200 31.500 43" fill="none" stroke="#b87860" stroke-width=".9"/><path d="M16.800 30.200Q20 28.600 23.200 30.400" fill="none" stroke="#3a2418" stroke-width="1.1"/><path d="M32 30.400Q35.200 28.600 38.400 30.200" fill="none" stroke="#3a2418" stroke-width="1.1"/><ellipse cx="20" cy="31.600" rx="1.7" ry="1.5" fill="#6a4818"/><ellipse cx="35.200" cy="31.600" rx="1.7" ry="1.5" fill="#6a4818"/><path d="M36 0.700L32.500 3.400L26 2.800L18 2.500L16.200 8L12.600 6.100L11.700 16L9 22L5.900 29.500L10 27.700L10.500 33L11.700 37.600L14.500 35L16 29L17.500 24L21 26L23.500 24.500L27 32.200L29 26L30.600 24.500L35 27L39.600 30.400L41.400 35.800L39.600 43L44 37L45 34L48.600 28.600L47.500 22L46.800 17.800L52.200 12L45 9.700L42 6L39.600 4.300L34 4Z" fill="#d84838"/><path d="M18 12C24 7 34 6.500 42 10C34 9 26 10 20 15Z" fill="#ec7058"/><path d="M14 20L12.500 30L15 25ZM44 20L45.500 30L43 27ZM24 14L25 24L27 17ZM33 13L35 25L37 17Z" fill="#b83428"/></g></svg><span class="t" id="t33" style="top:766.4px;height:13px;line-height:13px;font-size:11.5px;color:#fff;font-family:'DejaVu Sans','Liberation Sans',sans-serif;font-weight:700;right:757.6px;transform:scaleX(0.9137);transform-origin:100% 50%;text-shadow:-1px 0 #1c0c0e,1px 0 #1c0c0e,0 -1px #1c0c0e,0 1px #1c0c0e,-.7px -.7px #1c0c0e,.7px .7px #1c0c0e,-.7px .7px #1c0c0e,.7px -.7px #1c0c0e;">Lv.1</span><span class="t" id="t34" style="top:713px;height:16px;line-height:16px;font-size:10px;color:#fff;font-family:'Liberation Sans','Noto Sans CJK JP',sans-serif;font-weight:700;left:445px;transform:scaleX(0.9914);transform-origin:0 50%;text-shadow:-1px 0 #1c0c0e,1px 0 #1c0c0e,0 -1px #1c0c0e,0 1px #1c0c0e,-.7px -.7px #1c0c0e,.7px .7px #1c0c0e,-.7px .7px #1c0c0e,.7px -.7px #1c0c0e;">勇者A</span><span class="t" id="t35" style="top:733px;height:18px;line-height:18px;font-size:12.5px;color:#fff;font-family:'DejaVu Sans Mono','Liberation Mono',monospace;font-weight:700;left:445px;transform:scaleX(1.1618);transform-origin:0 50%;text-shadow:-1px 0 #1c0c0e,1px 0 #1c0c0e,0 -1px #1c0c0e,0 1px #1c0c0e,-.7px -.7px #1c0c0e,.7px .7px #1c0c0e,-.7px .7px #1c0c0e,.7px -.7px #1c0c0e;">HP</span><span class="t" id="t36" style="top:733px;height:18px;line-height:18px;font-size:12.5px;color:#fff;font-family:'DejaVu Sans Mono','Liberation Mono',monospace;font-weight:700;right:655.5px;transform:scaleX(1.0892);transform-origin:100% 50%;text-shadow:-1px 0 #1c0c0e,1px 0 #1c0c0e,0 -1px #1c0c0e,0 1px #1c0c0e,-.7px -.7px #1c0c0e,.7px .7px #1c0c0e,-.7px .7px #1c0c0e,.7px -.7px #1c0c0e;">79/80</span><div class="r" style="left:447px;top:750.8px;width:92.6px;height:3px;background:#fcc015;border-radius:1.5px;box-shadow:0 0 0 0.7px #4a2428;"></div><span class="t" id="t37" style="top:757px;height:18px;line-height:18px;font-size:12.5px;color:#fff;font-family:'DejaVu Sans Mono','Liberation Mono',monospace;font-weight:700;left:445px;transform:scaleX(1.1618);transform-origin:0 50%;text-shadow:-1px 0 #1c0c0e,1px 0 #1c0c0e,0 -1px #1c0c0e,0 1px #1c0c0e,-.7px -.7px #1c0c0e,.7px .7px #1c0c0e,-.7px .7px #1c0c0e,.7px -.7px #1c0c0e;">MP</span><span class="t" id="t38" style="top:757px;height:18px;line-height:18px;font-size:12.5px;color:#fff;font-family:'DejaVu Sans Mono','Liberation Mono',monospace;font-weight:700;right:655.5px;transform:scaleX(1.0892);transform-origin:100% 50%;text-shadow:-1px 0 #1c0c0e,1px 0 #1c0c0e,0 -1px #1c0c0e,0 1px #1c0c0e,-.7px -.7px #1c0c0e,.7px .7px #1c0c0e,-.7px .7px #1c0c0e,.7px -.7px #1c0c0e;">19/20</span><div class="r" style="left:447px;top:774.8px;width:92.6px;height:3px;background:#2440e8;border-radius:1.5px;box-shadow:0 0 0 0.7px #4a2428;"></div>
<svg class="r" style="left:545.2px;top:697px;overflow:visible;" width="68" height="16.5" viewBox="0 0 68 16.5"><g stroke-linecap="round" stroke-linejoin="round" fill="none"><path d="M1.6 5.4L6.4 4.2L10.2 5.2L13.4 7.6M8.2 5L6.6 9.6L10 11.6L9 15M6.6 9.6L3.6 11L1 10.4" stroke="#0a58c8" stroke-width="4"/><path d="M1.6 5.4L6.4 4.2L10.2 5.2L13.4 7.6M8.2 5L6.6 9.6L10 11.6L9 15M6.6 9.6L3.6 11L1 10.4" stroke="#28b8f8" stroke-width="2.6"/></g><circle cx="10.4" cy="2.4" r="2.3" fill="#0a58c8"/><circle cx="10.4" cy="2.4" r="1.5" fill="#48d0ff"/><g transform="translate(16.8 0)"><path d="M2 15.4C8 14.6 10 10 10.4 5L8.6 5.2L12.4 0.2L16.2 5L14.6 4.8C14.6 11 12 15.6 5 16Z" fill="#f8a010" stroke="#c07008" stroke-width=".6"/><path d="M0.8 4.6H3.8V8H5.8L6.4 4.200H9.400L8.800 11.600L4.400 13.400L3 11.200L0.800 10.800Z" fill="#f8e040" stroke="#b89010" stroke-width=".6"/></g><g transform="translate(33.6 0)" fill="#6a2a98" stroke="#451870" stroke-width=".6"><circle cx="2.6" cy="10.400" r="1.9"/><circle cx="13.6" cy="10" r="1.9"/><path d="M3.2 15.400C2 12.600 4 10 4.400 8C3.200 3.600 5.200 0.400 8.200 0.400S13.200 3.600 12 8C12.400 10 14.400 12.600 13.200 15.400Z"/><path d="M1.800 15.600H14.400" stroke-width="1.3" stroke="#451870"/></g><circle cx="40.4" cy="5" r=".8" fill="#2a0c48"/><circle cx="43.2" cy="5" r=".8" fill="#2a0c48"/><g transform="translate(50.4 0)" stroke="#5a44c0" stroke-width=".6"><circle cx="9.600" cy="4" r="3.7" fill="#a48cf4"/><circle cx="12.800" cy="9.600" r="3.3" fill="#a890f8"/><circle cx="3.400" cy="7" r="2.5" fill="#9c84f0"/><path d="M3.600 15.400L4.200 11.400L6.200 13.200L7.600 10.800L9 13.200L10.600 12L10.400 15.400Z" fill="#7c5ce0"/></g><circle cx="59" cy="2.800" r="1.5" fill="#ece4ff"/><circle cx="62.400" cy="8.600" r="1.2" fill="#e4dcff"/><circle cx="53.200" cy="6.200" r=".9" fill="#e4dcff"/></svg><svg class="r" style="left:558.8px;top:712px;overflow:visible;" width="67" height="66.4" viewBox="0 0 67 66.4"><defs><clipPath id="fc1"><rect x="-10" y="-2" width="90" height="68.400"/></clipPath></defs><g clip-path="url(#fc1)"><path d="M33 1C42 3 49 10 52 18C56 28 58.500 40 60.500 52L62.500 66H53L49.700 56.600C47 48 46 36 44.300 25C43 17 40 9 33 1Z" fill="#f0a868"/><path d="M40 6C48 14 52 30 54 46L57 64" fill="none" stroke="#fcc890" stroke-width="1.6"/><path d="M37 3C50 10 55 30 56 50" fill="none" stroke="#d88848" stroke-width=".8"/><path d="M8.200 66L12.700 58.400L20 54L24.400 51L30 56L37 49.400L42 54L47 58L50 66Z" fill="#c42830"/><path d="M3.700 66L5 60L9 56.600L13.600 57.500L12 66Z" fill="#8a6a48"/><path d="M19 66L21 63.800H35L37 66Z" fill="#f4f0ec"/><path d="M18 54L28 62M40 53L30 62" stroke="#403830" stroke-width="2.4"/><circle cx="24.400" cy="60.400" r="1.9" fill="#d8b050"/><circle cx="30.300" cy="60.400" r="1.9" fill="#d8b050"/><path d="M22.600 46L24.400 51.500L30 56L37 49.600L38.900 45.800Z" fill="#f4ece4"/><path d="M26 45L26 50L30 54L34.500 49.500L34.500 45Z" fill="#f4d0b0"/><path d="M18.600 26C18 33 18.600 38 21 42L29.800 48L38 41C40.500 36 40.600 30 39.800 24L31.600 20Z" fill="#fdebd8"/><path d="M29 33L27.800 38.500L29.400 38.800" fill="none" stroke="#e0b498" stroke-width=".8"/><path d="M27 42.200Q29.500 43 32 42" fill="none" stroke="#c88870" stroke-width=".9"/><path d="M18.800 31.200Q22 29.600 25 31.600M32.400 31.200Q35.500 29.400 38.600 30.800" fill="none" stroke="#6a4028" stroke-width="1"/><ellipse cx="21.800" cy="32.600" rx="1.9" ry="1.6" fill="#48a838"/><ellipse cx="35.400" cy="32.200" rx="1.9" ry="1.6" fill="#48a838"/><path d="M26 2C28 0 33 0 35 2L36 5C41 7 44 11 44.300 16C45 22 44 30 42 36L40.500 30L38 24L31.600 20.500L26 25L20 31L18.500 38L17.200 51.200L13 46L10 43L10.900 34C11 24 13 14 17.200 9.700C20 6.500 23 5 26 4.500Z" fill="#f4aa68"/><path d="M18 12C22 7 30 5 38 8C31 7 24 9 20 15Z" fill="#fccc98"/><path d="M31.600 20.500L30 8M14 22L12.500 40M40 14L42 28" fill="none" stroke="#d88848" stroke-width=".8"/></g></svg><span class="t" id="t39" style="top:766.4px;height:13px;line-height:13px;font-size:11.5px;color:#fff;font-family:'DejaVu Sans','Liberation Sans',sans-serif;font-weight:700;right:572.8px;transform:scaleX(0.9137);transform-origin:100% 50%;text-shadow:-1px 0 #1c0c0e,1px 0 #1c0c0e,0 -1px #1c0c0e,0 1px #1c0c0e,-.7px -.7px #1c0c0e,.7px .7px #1c0c0e,-.7px .7px #1c0c0e,.7px -.7px #1c0c0e;">Lv.3</span><span class="t" id="t40" style="top:713px;height:16px;line-height:16px;font-size:10px;color:#fff;font-family:'Liberation Sans','Noto Sans CJK JP',sans-serif;font-weight:700;left:629.8px;transform:scaleX(0.9914);transform-origin:0 50%;text-shadow:-1px 0 #1c0c0e,1px 0 #1c0c0e,0 -1px #1c0c0e,0 1px #1c0c0e,-.7px -.7px #1c0c0e,.7px .7px #1c0c0e,-.7px .7px #1c0c0e,.7px -.7px #1c0c0e;">勇者B</span><span class="t" id="t41" style="top:733px;height:18px;line-height:18px;font-size:12.5px;color:#fff;font-family:'DejaVu Sans Mono','Liberation Mono',monospace;font-weight:700;left:629.8px;transform:scaleX(1.1618);transform-origin:0 50%;text-shadow:-1px 0 #1c0c0e,1px 0 #1c0c0e,0 -1px #1c0c0e,0 1px #1c0c0e,-.7px -.7px #1c0c0e,.7px .7px #1c0c0e,-.7px .7px #1c0c0e,.7px -.7px #1c0c0e;">HP</span><span class="t" id="t42" style="top:733px;height:18px;line-height:18px;font-size:12.5px;color:#fff;font-family:'DejaVu Sans Mono','Liberation Mono',monospace;font-weight:700;right:470.7px;transform:scaleX(1.0892);transform-origin:100% 50%;text-shadow:-1px 0 #1c0c0e,1px 0 #1c0c0e,0 -1px #1c0c0e,0 1px #1c0c0e,-.7px -.7px #1c0c0e,.7px .7px #1c0c0e,-.7px .7px #1c0c0e,.7px -.7px #1c0c0e;">59/60</span><div class="r" style="left:631.8px;top:750.8px;width:92.6px;height:3px;background:#fcc015;border-radius:1.5px;box-shadow:0 0 0 0.7px #4a2428;"></div><span class="t" id="t43" style="top:757px;height:18px;line-height:18px;font-size:12.5px;color:#fff;font-family:'DejaVu Sans Mono','Liberation Mono',monospace;font-weight:700;left:629.8px;transform:scaleX(1.1618);transform-origin:0 50%;text-shadow:-1px 0 #1c0c0e,1px 0 #1c0c0e,0 -1px #1c0c0e,0 1px #1c0c0e,-.7px -.7px #1c0c0e,.7px .7px #1c0c0e,-.7px .7px #1c0c0e,.7px -.7px #1c0c0e;">MP</span><span class="t" id="t44" style="top:757px;height:18px;line-height:18px;font-size:12.5px;color:#fff;font-family:'DejaVu Sans Mono','Liberation Mono',monospace;font-weight:700;right:470.7px;transform:scaleX(1.0892);transform-origin:100% 50%;text-shadow:-1px 0 #1c0c0e,1px 0 #1c0c0e,0 -1px #1c0c0e,0 1px #1c0c0e,-.7px -.7px #1c0c0e,.7px .7px #1c0c0e,-.7px .7px #1c0c0e,.7px -.7px #1c0c0e;">29/30</span><div class="r" style="left:631.8px;top:774.8px;width:92.6px;height:3px;background:#2440e8;border-radius:1.5px;box-shadow:0 0 0 0.7px #4a2428;"></div>
<svg class="r" style="left:730px;top:697px;overflow:visible;" width="68" height="16.5" viewBox="0 0 68 16.5"><g stroke-linecap="round" stroke-linejoin="round" fill="none"><path d="M1.6 5.4L6.4 4.2L10.2 5.2L13.4 7.6M8.2 5L6.6 9.6L10 11.6L9 15M6.6 9.6L3.6 11L1 10.4" stroke="#0a58c8" stroke-width="4"/><path d="M1.6 5.4L6.4 4.2L10.2 5.2L13.4 7.6M8.2 5L6.6 9.6L10 11.6L9 15M6.6 9.6L3.6 11L1 10.4" stroke="#28b8f8" stroke-width="2.6"/></g><circle cx="10.4" cy="2.4" r="2.3" fill="#0a58c8"/><circle cx="10.4" cy="2.4" r="1.5" fill="#48d0ff"/><g transform="translate(16.8 0)"><path d="M2 15.4C8 14.6 10 10 10.4 5L8.6 5.2L12.4 0.2L16.2 5L14.6 4.8C14.6 11 12 15.6 5 16Z" fill="#f8a010" stroke="#c07008" stroke-width=".6"/><path d="M0.8 4.6H3.8V8H5.8L6.4 4.200H9.400L8.800 11.600L4.400 13.400L3 11.200L0.800 10.800Z" fill="#f8e040" stroke="#b89010" stroke-width=".6"/></g><g transform="translate(33.6 0)" fill="#6a2a98" stroke="#451870" stroke-width=".6"><circle cx="2.6" cy="10.400" r="1.9"/><circle cx="13.6" cy="10" r="1.9"/><path d="M3.2 15.400C2 12.600 4 10 4.400 8C3.200 3.600 5.200 0.400 8.200 0.400S13.200 3.600 12 8C12.400 10 14.400 12.600 13.200 15.400Z"/><path d="M1.800 15.600H14.400" stroke-width="1.3" stroke="#451870"/></g><circle cx="40.4" cy="5" r=".8" fill="#2a0c48"/><circle cx="43.2" cy="5" r=".8" fill="#2a0c48"/><g transform="translate(50.4 0)" stroke="#5a44c0" stroke-width=".6"><circle cx="9.600" cy="4" r="3.7" fill="#a48cf4"/><circle cx="12.800" cy="9.600" r="3.3" fill="#a890f8"/><circle cx="3.400" cy="7" r="2.5" fill="#9c84f0"/><path d="M3.600 15.400L4.200 11.400L6.200 13.200L7.600 10.800L9 13.200L10.600 12L10.400 15.400Z" fill="#7c5ce0"/></g><circle cx="59" cy="2.800" r="1.5" fill="#ece4ff"/><circle cx="62.400" cy="8.600" r="1.2" fill="#e4dcff"/><circle cx="53.200" cy="6.200" r=".9" fill="#e4dcff"/></svg><svg class="r" style="left:743.6px;top:712px;overflow:visible;" width="67" height="66.4" viewBox="0 0 67 66.4"><defs><clipPath id="fc2"><rect x="-10" y="-2" width="90" height="68.400"/></clipPath></defs><g clip-path="url(#fc2)"><path d="M-6.900 66L-4.500 58L-2.400 54.800L11.100 51.200L22.800 46.700H43.600L53.500 52L62.500 59.300L66.100 66Z" fill="#2c3424"/><path d="M-6.900 66L-4.500 58L0 56L3 66Z" fill="#4a5458"/><path d="M8.400 52L17.400 62L15 64L6 53Z" fill="#5a4430"/><path d="M22.800 45.800L23.700 66H44.500L43.600 46.700L34.500 52Z" fill="#a6ae9a"/><path d="M34.500 52L33 66" stroke="#7c8474" stroke-width="1"/><path d="M26.500 42L26.500 48L34.500 52.500L38.500 48L38.500 41Z" fill="#ecc8a4"/><path d="M6.600 19.200L17 23L17.500 32L13 29Z" fill="#f4d4b4"/><path d="M59.800 19.600L47.500 23L47.500 32.500L52 29.500Z" fill="#f4d4b4"/><path d="M9.500 21.200L16 25.500L16.500 30Z" fill="#d8a888"/><path d="M57 21.400L49 25.500L48.500 30.500Z" fill="#d8a888"/><path d="M20.500 20C20 27 20.500 32 23 37L31.900 45.200L40.500 37C43 32 43.800 26 43.600 20L30.500 15Z" fill="#fdecd8"/><path d="M31.500 27L30.200 34L32.500 34.500" fill="none" stroke="#d8ac8c" stroke-width=".9"/><path d="M28 38.400Q31.500 39 35 38.200" fill="none" stroke="#b8846c" stroke-width=".9"/><path d="M20.800 25.400Q24 24 27 25.800M34.800 25.800Q37.800 24 41 25.400" fill="none" stroke="#6a5030" stroke-width="1.1"/><ellipse cx="24" cy="26.800" rx="1.7" ry="1.2" fill="#7c6a50"/><ellipse cx="37.800" cy="26.800" rx="1.7" ry="1.2" fill="#7c6a50"/><path d="M15.600 16C15.500 8 21.900 3 31.800 1.200C42.700 3 49 8 49 16C50.500 24 51.500 34 52.600 52L53.500 61L50 57L46.300 52C46 42 45 32 43.600 20.500L38 16.500L30.500 16L24 17L20.100 21C19.500 32 20.500 50 21 66H17.400C15.500 58 13.800 50.300 13.800 44C13.800 36 15 26 15.600 16Z" fill="#eeaa48"/><path d="M19 10C24 5 38 4.500 45 10C38 8 26 8 19 10Z" fill="#fcd080"/><path d="M30.500 16L31.500 3M17.500 24L16 60M47 24L50 54M19.500 30L19.500 64" fill="none" stroke="#c88428" stroke-width=".8"/></g></svg><span class="t" id="t45" style="top:766.4px;height:13px;line-height:13px;font-size:11.5px;color:#fff;font-family:'DejaVu Sans','Liberation Sans',sans-serif;font-weight:700;right:388px;transform:scaleX(0.9137);transform-origin:100% 50%;text-shadow:-1px 0 #1c0c0e,1px 0 #1c0c0e,0 -1px #1c0c0e,0 1px #1c0c0e,-.7px -.7px #1c0c0e,.7px .7px #1c0c0e,-.7px .7px #1c0c0e,.7px -.7px #1c0c0e;">Lv.1</span><span class="t" id="t46" style="top:713px;height:16px;line-height:16px;font-size:10px;color:#fff;font-family:'Liberation Sans','Noto Sans CJK JP',sans-serif;font-weight:700;left:814.6px;transform:scaleX(0.9000);transform-origin:0 50%;text-shadow:-1px 0 #1c0c0e,1px 0 #1c0c0e,0 -1px #1c0c0e,0 1px #1c0c0e,-.7px -.7px #1c0c0e,.7px .7px #1c0c0e,-.7px .7px #1c0c0e,.7px -.7px #1c0c0e;">エルフ</span><span class="t" id="t47" style="top:733px;height:18px;line-height:18px;font-size:12.5px;color:#fff;font-family:'DejaVu Sans Mono','Liberation Mono',monospace;font-weight:700;left:814.6px;transform:scaleX(1.1618);transform-origin:0 50%;text-shadow:-1px 0 #1c0c0e,1px 0 #1c0c0e,0 -1px #1c0c0e,0 1px #1c0c0e,-.7px -.7px #1c0c0e,.7px .7px #1c0c0e,-.7px .7px #1c0c0e,.7px -.7px #1c0c0e;">HP</span><span class="t" id="t48" style="top:733px;height:18px;line-height:18px;font-size:12.5px;color:#fff;font-family:'DejaVu Sans Mono','Liberation Mono',monospace;font-weight:700;right:285.9px;transform:scaleX(1.0892);transform-origin:100% 50%;text-shadow:-1px 0 #1c0c0e,1px 0 #1c0c0e,0 -1px #1c0c0e,0 1px #1c0c0e,-.7px -.7px #1c0c0e,.7px .7px #1c0c0e,-.7px .7px #1c0c0e,.7px -.7px #1c0c0e;">35/40</span><div class="r" style="left:816.6px;top:750.8px;width:92.6px;height:3px;background:#fcc015;border-radius:1.5px;box-shadow:0 0 0 0.7px #4a2428;"></div><span class="t" id="t49" style="top:757px;height:18px;line-height:18px;font-size:12.5px;color:#fff;font-family:'DejaVu Sans Mono','Liberation Mono',monospace;font-weight:700;left:814.6px;transform:scaleX(1.1618);transform-origin:0 50%;text-shadow:-1px 0 #1c0c0e,1px 0 #1c0c0e,0 -1px #1c0c0e,0 1px #1c0c0e,-.7px -.7px #1c0c0e,.7px .7px #1c0c0e,-.7px .7px #1c0c0e,.7px -.7px #1c0c0e;">MP</span><span class="t" id="t50" style="top:757px;height:18px;line-height:18px;font-size:12.5px;color:#fff;font-family:'DejaVu Sans Mono','Liberation Mono',monospace;font-weight:700;right:285.9px;transform:scaleX(1.0892);transform-origin:100% 50%;text-shadow:-1px 0 #1c0c0e,1px 0 #1c0c0e,0 -1px #1c0c0e,0 1px #1c0c0e,-.7px -.7px #1c0c0e,.7px .7px #1c0c0e,-.7px .7px #1c0c0e,.7px -.7px #1c0c0e;">45/50</span><div class="r" style="left:816.6px;top:774.8px;width:92.6px;height:3px;background:#2440e8;border-radius:1.5px;box-shadow:0 0 0 0.7px #4a2428;"></div>
</div></div><div class="r" style="left:833px;top:0px;width:364px;height:21px;background:#6b6b6b;"></div>
<span class="t" id="t51" style="top:1.3px;height:21px;line-height:21px;font-size:12px;color:#e4e4e4;left:837px;transform:scaleX(0.8607);transform-origin:0 50%;">メインメニュー表示のプロパティ</span>
<div class="r" style="left:833px;top:21px;width:347px;height:978px;background:#f5f0d7;border-left:1px solid #a2a2a2;border-right:1px solid #a2a2a2;"></div>
<div class="r" style="left:836px;top:24px;width:341px;height:29px;background:#c48f00;"></div>
<svg class="r" style="left:840px;top:32px;" width="13" height="13" viewBox="0 0 13 13"><circle cx="6.5" cy="6.5" r="6.2" fill="#fff"/><path d="M3.3 5.2L6.5 8.6L9.7 5.2" fill="none" stroke="#c48f00" stroke-width="2"/></svg>
<span class="t" id="t52" style="top:25.3px;height:28px;line-height:28px;font-size:12.5px;color:#fff;left:857px;transform:scaleX(0.9994);transform-origin:0 50%;">基本</span>
<div class="r" style="left:833px;top:55px;width:347px;height:1px;background:#a2a2a2;"></div>
<span class="t" id="t53" style="top:58px;height:21px;line-height:21px;font-size:12px;color:#000;left:837px;transform:scaleX(1.0711);transform-origin:0 50%;">表示位置X</span>
<span class="t" id="t54" style="top:58px;height:21px;line-height:21px;font-size:11.5px;color:#000;font-family:'DejaVu Sans','Noto Sans CJK JP',sans-serif;left:1064px;transform:scaleX(1.0928);transform-origin:0 50%;">47</span>
<svg class="r" style="left:1163px;top:59px;" width="14" height="14" viewBox="0 0 14 14"><circle cx="7" cy="7" r="7" fill="#a2a2a2"/><path d="M3.8 5.9L7 2.6L10.2 5.9ZM3.8 8.1L7 11.4L10.2 8.1Z" fill="#f5f0d7"/></svg>
<div class="r" style="left:833px;top:76px;width:347px;height:1px;background:#a2a2a2;"></div>
<span class="t" id="t55" style="top:79px;height:21px;line-height:21px;font-size:12px;color:#000;left:837px;transform:scaleX(1.0533);transform-origin:0 50%;">表示位置Y</span>
<span class="t" id="t56" style="top:79px;height:21px;line-height:21px;font-size:11.5px;color:#000;font-family:'DejaVu Sans','Noto Sans CJK JP',sans-serif;left:1064px;transform:scaleX(1.0928);transform-origin:0 50%;">47</span>
<svg class="r" style="left:1163px;top:80px;" width="14" height="14" viewBox="0 0 14 14"><circle cx="7" cy="7" r="7" fill="#a2a2a2"/><path d="M3.8 5.9L7 2.6L10.2 5.9ZM3.8 8.1L7 11.4L10.2 8.1Z" fill="#f5f0d7"/></svg>
<div class="r" style="left:833px;top:97px;width:347px;height:1px;background:#a2a2a2;"></div>
<span class="t" id="t57" style="top:100px;height:21px;line-height:21px;font-size:12px;color:#000;left:837px;transform:scaleX(0.8921);transform-origin:0 50%;">横サイズ</span>
<span class="t" id="t58" style="top:100px;height:21px;line-height:21px;font-size:11.5px;color:#000;font-family:'DejaVu Sans','Noto Sans CJK JP',sans-serif;left:1064px;transform:scaleX(1.0750);transform-origin:0 50%;">434</span>
<svg class="r" style="left:1163px;top:101px;" width="14" height="14" viewBox="0 0 14 14"><circle cx="7" cy="7" r="7" fill="#a2a2a2"/><path d="M3.8 5.9L7 2.6L10.2 5.9ZM3.8 8.1L7 11.4L10.2 8.1Z" fill="#f5f0d7"/></svg>
<div class="r" style="left:833px;top:118px;width:347px;height:1px;background:#a2a2a2;"></div>
<span class="t" id="t59" style="top:121px;height:21px;line-height:21px;font-size:12px;color:#000;left:837px;transform:scaleX(0.8921);transform-origin:0 50%;">縦サイズ</span>
<span class="t" id="t60" style="top:121px;height:21px;line-height:21px;font-size:11.5px;color:#000;font-family:'DejaVu Sans','Noto Sans CJK JP',sans-serif;left:1064px;transform:scaleX(1.0750);transform-origin:0 50%;">226</span>
<svg class="r" style="left:1163px;top:122px;" width="14" height="14" viewBox="0 0 14 14"><circle cx="7" cy="7" r="7" fill="#a2a2a2"/><path d="M3.8 5.9L7 2.6L10.2 5.9ZM3.8 8.1L7 11.4L10.2 8.1Z" fill="#f5f0d7"/></svg>
<div class="r" style="left:833px;top:139px;width:347px;height:1px;background:#a2a2a2;"></div>
<span class="t" id="t61" style="top:142px;height:21px;line-height:21px;font-size:12px;color:#000;left:837px;transform:scaleX(1.0684);transform-origin:0 50%;">表示原点</span>
<span class="t" id="t62" style="top:142px;height:21px;line-height:21px;font-size:12px;color:#000;left:1064px;transform:scaleX(1.0410);transform-origin:0 50%;">左上</span>
<svg class="r" style="left:1163px;top:143.5px;" width="14" height="13" viewBox="0 0 14 13"><rect x="0" y="0" width="14" height="13" rx="1.6" fill="#a2a2a2"/><path d="M1.4 1.6H12.6L7 7.8Z" fill="#f5f0d7"/></svg>
<div class="r" style="left:833px;top:160px;width:347px;height:1px;background:#a2a2a2;"></div>
<span class="t" id="t63" style="top:163px;height:21px;line-height:21px;font-size:12px;color:#000;left:837px;transform:scaleX(0.8997);transform-origin:0 50%;">スケールX</span>
<span class="t" id="t64" style="top:163px;height:21px;line-height:21px;font-size:11.5px;color:#000;font-family:'DejaVu Sans','Noto Sans CJK JP',sans-serif;left:1064px;transform:scaleX(0.8188);transform-origin:0 50%;">1</span>
<svg class="r" style="left:1163px;top:164px;" width="14" height="14" viewBox="0 0 14 14"><circle cx="7" cy="7" r="7" fill="#a2a2a2"/><path d="M3.8 5.9L7 2.6L10.2 5.9ZM3.8 8.1L7 11.4L10.2 8.1Z" fill="#f5f0d7"/></svg>
<div class="r" style="left:833px;top:181px;width:347px;height:1px;background:#a2a2a2;"></div>
<span class="t" id="t65" style="top:184px;height:21px;line-height:21px;font-size:12px;color:#000;left:837px;transform:scaleX(0.8837);transform-origin:0 50%;">スケールY</span>
<span class="t" id="t66" style="top:184px;height:21px;line-height:21px;font-size:11.5px;color:#000;font-family:'DejaVu Sans','Noto Sans CJK JP',sans-serif;left:1064px;transform:scaleX(0.8188);transform-origin:0 50%;">1</span>
<svg class="r" style="left:1163px;top:185px;" width="14" height="14" viewBox="0 0 14 14"><circle cx="7" cy="7" r="7" fill="#a2a2a2"/><path d="M3.8 5.9L7 2.6L10.2 5.9ZM3.8 8.1L7 11.4L10.2 8.1Z" fill="#f5f0d7"/></svg>
<div class="r" style="left:833px;top:202px;width:347px;height:1px;background:#a2a2a2;"></div>
<span class="t" id="t67" style="top:205px;height:21px;line-height:21px;font-size:12px;color:#000;left:837px;transform:scaleX(0.9936);transform-origin:0 50%;">特殊座標指定タグ</span>
<svg class="r" style="left:1163.6px;top:206.3px;" width="14" height="13" viewBox="0 0 14 13"><path d="M0.4 6.5H12M6.8 0.9L12.4 6.5L6.8 12.1" fill="none" stroke="#9a9a9a" stroke-width="1.7"/></svg>
<div class="r" style="left:833px;top:223px;width:347px;height:1px;background:#a2a2a2;"></div>
<div class="r" style="left:836px;top:226px;width:341px;height:29px;background:#c48f00;"></div>
<svg class="r" style="left:840px;top:234px;" width="13" height="13" viewBox="0 0 13 13"><circle cx="6.5" cy="6.5" r="6.2" fill="#fff"/><path d="M3.3 5.2L6.5 8.6L9.7 5.2" fill="none" stroke="#c48f00" stroke-width="2"/></svg>
<span class="t" id="t68" style="top:227.3px;height:28px;line-height:28px;font-size:12.5px;color:#fff;left:857px;transform:scaleX(0.9994);transform-origin:0 50%;">表示</span>
<div class="r" style="left:833px;top:257px;width:347px;height:1px;background:#a2a2a2;"></div>
<span class="t" id="t69" style="top:260px;height:21px;line-height:21px;font-size:12px;color:#000;left:837px;transform:scaleX(1.0743);transform-origin:0 50%;">画像</span>
<span class="t" id="t70" style="top:260px;height:21px;line-height:21px;font-size:11.5px;color:#000;font-family:'DejaVu Sans','Noto Sans CJK JP',sans-serif;left:1064px;transform:scaleX(1.1157);transform-origin:0 50%;">DefaultWindo...</span>
<svg class="r" style="left:1163.6px;top:261.3px;" width="14" height="13" viewBox="0 0 14 13"><path d="M0.4 6.5H12M6.8 0.9L12.4 6.5L6.8 12.1" fill="none" stroke="#9a9a9a" stroke-width="1.7"/></svg>
<div class="r" style="left:833px;top:278px;width:347px;height:1px;background:#a2a2a2;"></div>
<span class="t" id="t71" style="top:281px;height:21px;line-height:21px;font-size:12px;color:#000;left:837px;transform:scaleX(0.8965);transform-origin:0 50%;">指定サイズを矩形として塗りつぶす</span>
<div class="r" style="left:1065px;top:281px;width:32px;height:15.5px;background:#6a6a6a;border-radius:8px;"></div><div class="r" style="left:1066.6px;top:282.6px;width:12.4px;height:12.4px;background:#cfcfcf;border-radius:50%;"></div>
<div class="r" style="left:833px;top:299px;width:347px;height:1px;background:#a2a2a2;"></div>
<div class="r" style="left:1061px;top:300px;width:118px;height:20px;background:#fff;"></div>
<span class="t" id="t72" style="top:302px;height:21px;line-height:21px;font-size:12px;color:#000;left:837px;transform:scaleX(1.0486);transform-origin:0 50%;">色</span>
<span class="t" id="t73" style="top:302px;height:21px;line-height:21px;font-size:11.5px;color:#000;font-family:'DejaVu Sans','Noto Sans CJK JP',sans-serif;left:1064px;transform:scaleX(1.0393);transform-origin:0 50%;">FFFFFFFF</span>
<svg class="r" style="left:1163.6px;top:303.3px;" width="14" height="13" viewBox="0 0 14 13"><path d="M0.4 6.5H12M6.8 0.9L12.4 6.5L6.8 12.1" fill="none" stroke="#9a9a9a" stroke-width="1.7"/></svg>
<div class="r" style="left:833px;top:320px;width:347px;height:1px;background:#a2a2a2;"></div>
<span class="t" id="t74" style="top:323px;height:21px;line-height:21px;font-size:12px;color:#000;left:837px;transform:scaleX(1.0308);transform-origin:0 50%;">加算合成を利用</span>
<div class="r" style="left:1065px;top:323px;width:32px;height:15.5px;background:#6a6a6a;border-radius:8px;"></div><div class="r" style="left:1066.6px;top:324.6px;width:12.4px;height:12.4px;background:#cfcfcf;border-radius:50%;"></div>
<div class="r" style="left:833px;top:341px;width:347px;height:1px;background:#a2a2a2;"></div>
<span class="t" id="t75" style="top:344px;height:21px;line-height:21px;font-size:12px;color:#000;left:837px;transform:scaleX(0.9081);transform-origin:0 50%;">マスク画像</span>
<span class="t" id="t76" style="top:344px;height:21px;line-height:21px;font-size:12px;color:#000;left:1064px;transform:scaleX(0.8245);transform-origin:0 50%;">なし</span>
<svg class="r" style="left:1163.6px;top:345.3px;" width="14" height="13" viewBox="0 0 14 13"><path d="M0.4 6.5H12M6.8 0.9L12.4 6.5L6.8 12.1" fill="none" stroke="#9a9a9a" stroke-width="1.7"/></svg>
<div class="r" style="left:833px;top:362px;width:347px;height:1px;background:#a2a2a2;"></div>
<div class="r" style="left:836px;top:365px;width:341px;height:29px;background:#c48f00;"></div>
<svg class="r" style="left:840px;top:373px;" width="13" height="13" viewBox="0 0 13 13"><circle cx="6.5" cy="6.5" r="6.2" fill="#fff"/><path d="M3.3 5.2L6.5 8.6L9.7 5.2" fill="none" stroke="#c48f00" stroke-width="2"/></svg>
<span class="t" id="t77" style="top:366.3px;height:28px;line-height:28px;font-size:12.5px;color:#fff;left:857px;transform:scaleX(1.0197);transform-origin:0 50%;">表示演出</span>
<div class="r" style="left:833px;top:396px;width:347px;height:1px;background:#a2a2a2;"></div>
<span class="t" id="t78" style="top:399px;height:21px;line-height:21px;font-size:12px;color:#000;left:837px;transform:scaleX(0.8259);transform-origin:0 50%;">「動き」を参照するスプライトセット</span>
<span class="t" id="t79" style="top:399px;height:21px;line-height:21px;font-size:12px;color:#000;left:1064px;transform:scaleX(0.8245);transform-origin:0 50%;">なし</span>
<svg class="r" style="left:1163.6px;top:400.3px;" width="14" height="13" viewBox="0 0 14 13"><path d="M0.4 6.5H12M6.8 0.9L12.4 6.5L6.8 12.1" fill="none" stroke="#9a9a9a" stroke-width="1.7"/></svg>
<div class="r" style="left:833px;top:417px;width:347px;height:1px;background:#a2a2a2;"></div>
<div class="r" style="left:834px;top:418px;width:345px;height:20px;background:#e8e8e8;"></div>
<span class="t" id="t80" style="top:420px;height:21px;line-height:21px;font-size:12px;color:#a6a6a6;left:837px;transform:scaleX(0.9043);transform-origin:0 50%;">表示中モーション</span>
<span class="t" id="t81" style="top:420px;height:21px;line-height:21px;font-size:12px;color:#a6a6a6;left:1064px;transform:scaleX(0.8245);transform-origin:0 50%;">なし</span>
<svg class="r" style="left:1145px;top:421.5px;" width="14" height="13" viewBox="0 0 14 13"><rect x="0" y="0" width="14" height="13" rx="1.6" fill="#a2a2a2"/><path d="M1.4 1.6H12.6L7 7.8Z" fill="#e8e8e8"/></svg>
<svg class="r" style="left:1163.5px;top:421px;" width="14" height="14" viewBox="0 0 14 14"><path d="M8.2 0.6L13.4 5.8L7.4 11.8L2.2 6.6Z" fill="#a2a2a2"/><path d="M1.8 7.8L6.2 12.200L0.4 13.6Z" fill="#a2a2a2"/><path d="M0 13.600H5" stroke="#a2a2a2" stroke-width="1"/></svg>
<div class="r" style="left:833px;top:438px;width:347px;height:1px;background:#a2a2a2;"></div>
<div class="r" style="left:834px;top:439px;width:345px;height:20px;background:#e8e8e8;"></div>
<span class="t" id="t82" style="top:441px;height:21px;line-height:21px;font-size:12px;color:#a6a6a6;left:837px;transform:scaleX(0.8834);transform-origin:0 50%;">出現モーション</span>
<span class="t" id="t83" style="top:441px;height:21px;line-height:21px;font-size:12px;color:#a6a6a6;left:1064px;transform:scaleX(0.8245);transform-origin:0 50%;">なし</span>
<svg class="r" style="left:1145px;top:442.5px;" width="14" height="13" viewBox="0 0 14 13"><rect x="0" y="0" width="14" height="13" rx="1.6" fill="#a2a2a2"/><path d="M1.4 1.6H12.6L7 7.8Z" fill="#e8e8e8"/></svg>
<svg class="r" style="left:1163.5px;top:442px;" width="14" height="14" viewBox="0 0 14 14"><path d="M8.2 0.6L13.4 5.8L7.4 11.8L2.2 6.6Z" fill="#a2a2a2"/><path d="M1.8 7.8L6.2 12.200L0.4 13.6Z" fill="#a2a2a2"/><path d="M0 13.600H5" stroke="#a2a2a2" stroke-width="1"/></svg>
<div class="r" style="left:833px;top:459px;width:347px;height:1px;background:#a2a2a2;"></div>
<div class="r" style="left:834px;top:460px;width:345px;height:20px;background:#e8e8e8;"></div>
<span class="t" id="t84" style="top:462px;height:21px;line-height:21px;font-size:12px;color:#a6a6a6;left:837px;transform:scaleX(0.8834);transform-origin:0 50%;">消滅モーション</span>
<span class="t" id="t85" style="top:462px;height:21px;line-height:21px;font-size:12px;color:#a6a6a6;left:1064px;transform:scaleX(0.8245);transform-origin:0 50%;">なし</span>
<svg class="r" style="left:1145px;top:463.5px;" width="14" height="13" viewBox="0 0 14 13"><rect x="0" y="0" width="14" height="13" rx="1.6" fill="#a2a2a2"/><path d="M1.4 1.6H12.6L7 7.8Z" fill="#e8e8e8"/></svg>
<svg class="r" style="left:1163.5px;top:463px;" width="14" height="14" viewBox="0 0 14 14"><path d="M8.2 0.6L13.4 5.8L7.4 11.8L2.2 6.6Z" fill="#a2a2a2"/><path d="M1.8 7.8L6.2 12.200L0.4 13.6Z" fill="#a2a2a2"/><path d="M0 13.600H5" stroke="#a2a2a2" stroke-width="1"/></svg>
<div class="r" style="left:833px;top:480px;width:347px;height:1px;background:#a2a2a2;"></div>
<div class="r" style="left:836px;top:483px;width:341px;height:29px;background:#c48f00;"></div>
<svg class="r" style="left:840px;top:491px;" width="13" height="13" viewBox="0 0 13 13"><circle cx="6.5" cy="6.5" r="6.2" fill="#fff"/><path d="M3.3 5.2L6.5 8.6L9.7 5.2" fill="none" stroke="#c48f00" stroke-width="2"/></svg>
<span class="t" id="t86" style="top:484.3px;height:28px;line-height:28px;font-size:12.5px;color:#fff;left:857px;transform:scaleX(0.9994);transform-origin:0 50%;">制御</span>
<div class="r" style="left:833px;top:514px;width:347px;height:1px;background:#a2a2a2;"></div>
<span class="t" id="t87" style="top:517px;height:21px;line-height:21px;font-size:12px;color:#000;left:837px;transform:scaleX(0.8469);transform-origin:0 50%;">シングルクリックで決定</span>
<div class="r" style="left:1065px;top:517px;width:32px;height:15.5px;background:#6a6a6a;border-radius:8px;"></div><div class="r" style="left:1066.6px;top:518.6px;width:12.4px;height:12.4px;background:#cfcfcf;border-radius:50%;"></div>
<div class="r" style="left:833px;top:535px;width:347px;height:1px;background:#a2a2a2;"></div>
<span class="t" id="t88" style="top:538px;height:21px;line-height:21px;font-size:12px;color:#000;left:837px;transform:scaleX(0.8928);transform-origin:0 50%;">メニューが開いたときに非表示</span>
<div class="r" style="left:1065px;top:538px;width:32px;height:15.5px;background:#6a6a6a;border-radius:8px;"></div><div class="r" style="left:1082.6px;top:539.6px;width:12.4px;height:12.4px;background:#fff;border-radius:50%;"></div><div class="r" style="left:1088.2px;top:542.6px;width:1.3px;height:6.4px;background:#555;"></div>
<div class="r" style="left:833px;top:556px;width:347px;height:1px;background:#a2a2a2;"></div>
<span class="t" id="t89" style="top:559px;height:21px;line-height:21px;font-size:12px;color:#000;left:837px;transform:scaleX(0.9287);transform-origin:0 50%;">子供のテキストが空のときに非表示</span>
<div class="r" style="left:1065px;top:559px;width:32px;height:15.5px;background:#6a6a6a;border-radius:8px;"></div><div class="r" style="left:1066.6px;top:560.6px;width:12.4px;height:12.4px;background:#cfcfcf;border-radius:50%;"></div>
<div class="r" style="left:833px;top:577px;width:347px;height:1px;background:#a2a2a2;"></div>
<span class="t" id="t90" style="top:580px;height:21px;line-height:21px;font-size:12px;color:#000;left:837px;transform:scaleX(0.8402);transform-origin:0 50%;">クリッピングに親も含める</span>
<div class="r" style="left:1065px;top:580px;width:32px;height:15.5px;background:#6a6a6a;border-radius:8px;"></div><div class="r" style="left:1066.6px;top:581.6px;width:12.4px;height:12.4px;background:#cfcfcf;border-radius:50%;"></div>
<div class="r" style="left:833px;top:598px;width:347px;height:1px;background:#a2a2a2;"></div>
<div class="r" style="left:836px;top:601px;width:341px;height:29px;background:#c48f00;"></div>
<svg class="r" style="left:840px;top:609px;" width="13" height="13" viewBox="0 0 13 13"><circle cx="6.5" cy="6.5" r="6.2" fill="#fff"/><path d="M3.3 5.2L6.5 8.6L9.7 5.2" fill="none" stroke="#c48f00" stroke-width="2"/></svg>
<span class="t" id="t91" style="top:602.3px;height:28px;line-height:28px;font-size:12.5px;color:#fff;left:857px;transform:scaleX(0.8332);transform-origin:0 50%;">サブメニューコンテナの設定</span>
<div class="r" style="left:833px;top:632px;width:347px;height:1px;background:#a2a2a2;"></div>
<span class="t" id="t92" style="top:635px;height:21px;line-height:21px;font-size:12px;color:#000;left:837px;transform:scaleX(1.0684);transform-origin:0 50%;">配置方法</span>
<span class="t" id="t93" style="top:635px;height:21px;line-height:21px;font-size:12px;color:#000;left:1064px;transform:scaleX(0.9448);transform-origin:0 50%;">縦に並べる</span>
<svg class="r" style="left:1163px;top:636.5px;" width="14" height="13" viewBox="0 0 14 13"><rect x="0" y="0" width="14" height="13" rx="1.6" fill="#a2a2a2"/><path d="M1.4 1.6H12.6L7 7.8Z" fill="#f5f0d7"/></svg>
<div class="r" style="left:833px;top:653px;width:347px;height:1px;background:#a2a2a2;"></div>
<span class="t" id="t94" style="top:656px;height:21px;line-height:21px;font-size:12px;color:#000;left:837px;transform:scaleX(0.9596);transform-origin:0 50%;">1行または1列あたりの要素数</span>
<span class="t" id="t95" style="top:656px;height:21px;line-height:21px;font-size:11.5px;color:#000;font-family:'DejaVu Sans','Noto Sans CJK JP',sans-serif;left:1064px;transform:scaleX(1.0235);transform-origin:0 50%;">2</span>
<svg class="r" style="left:1163px;top:657px;" width="14" height="14" viewBox="0 0 14 14"><circle cx="7" cy="7" r="7" fill="#a2a2a2"/><path d="M3.8 5.9L7 2.6L10.2 5.9ZM3.8 8.1L7 11.4L10.2 8.1Z" fill="#f5f0d7"/></svg>
<div class="r" style="left:833px;top:674px;width:347px;height:1px;background:#a2a2a2;"></div>
<span class="t" id="t96" style="top:677px;height:21px;line-height:21px;font-size:12px;color:#000;left:837px;transform:scaleX(0.8086);transform-origin:0 50%;">オフセットX</span>
<span class="t" id="t97" style="top:677px;height:21px;line-height:21px;font-size:11.5px;color:#000;font-family:'DejaVu Sans','Noto Sans CJK JP',sans-serif;left:1064px;transform:scaleX(1.0928);transform-origin:0 50%;">40</span>
<svg class="r" style="left:1163px;top:678px;" width="14" height="14" viewBox="0 0 14 14"><circle cx="7" cy="7" r="7" fill="#a2a2a2"/><path d="M3.8 5.9L7 2.6L10.2 5.9ZM3.8 8.1L7 11.4L10.2 8.1Z" fill="#f5f0d7"/></svg>
<div class="r" style="left:833px;top:695px;width:347px;height:1px;background:#a2a2a2;"></div>
<span class="t" id="t98" style="top:698px;height:21px;line-height:21px;font-size:12px;color:#000;left:837px;transform:scaleX(0.8013);transform-origin:0 50%;">オフセットY</span>
<span class="t" id="t99" style="top:698px;height:21px;line-height:21px;font-size:11.5px;color:#000;font-family:'DejaVu Sans','Noto Sans CJK JP',sans-serif;left:1064px;transform:scaleX(1.0235);transform-origin:0 50%;">6</span>
<svg class="r" style="left:1163px;top:699px;" width="14" height="14" viewBox="0 0 14 14"><circle cx="7" cy="7" r="7" fill="#a2a2a2"/><path d="M3.8 5.9L7 2.6L10.2 5.9ZM3.8 8.1L7 11.4L10.2 8.1Z" fill="#f5f0d7"/></svg>
<div class="r" style="left:833px;top:716px;width:347px;height:1px;background:#a2a2a2;"></div>
<span class="t" id="t100" style="top:719px;height:21px;line-height:21px;font-size:12px;color:#000;left:837px;transform:scaleX(0.8596);transform-origin:0 50%;">サブメニューコンテナ横幅</span>
<span class="t" id="t101" style="top:719px;height:21px;line-height:21px;font-size:11.5px;color:#000;font-family:'DejaVu Sans','Noto Sans CJK JP',sans-serif;left:1064px;transform:scaleX(1.0750);transform-origin:0 50%;">192</span>
<svg class="r" style="left:1163px;top:720px;" width="14" height="14" viewBox="0 0 14 14"><circle cx="7" cy="7" r="7" fill="#a2a2a2"/><path d="M3.8 5.9L7 2.6L10.2 5.9ZM3.8 8.1L7 11.4L10.2 8.1Z" fill="#f5f0d7"/></svg>
<div class="r" style="left:833px;top:737px;width:347px;height:1px;background:#a2a2a2;"></div>
<span class="t" id="t102" style="top:740px;height:21px;line-height:21px;font-size:12px;color:#000;left:837px;transform:scaleX(0.8596);transform-origin:0 50%;">サブメニューコンテナ縦幅</span>
<span class="t" id="t103" style="top:740px;height:21px;line-height:21px;font-size:11.5px;color:#000;font-family:'DejaVu Sans','Noto Sans CJK JP',sans-serif;left:1064px;transform:scaleX(1.0928);transform-origin:0 50%;">40</span>
<svg class="r" style="left:1163px;top:741px;" width="14" height="14" viewBox="0 0 14 14"><circle cx="7" cy="7" r="7" fill="#a2a2a2"/><path d="M3.8 5.9L7 2.6L10.2 5.9ZM3.8 8.1L7 11.4L10.2 8.1Z" fill="#f5f0d7"/></svg>
<div class="r" style="left:833px;top:758px;width:347px;height:1px;background:#a2a2a2;"></div>
<span class="t" id="t104" style="top:761px;height:21px;line-height:21px;font-size:12px;color:#000;left:837px;transform:scaleX(0.8749);transform-origin:0 50%;">サブメニューコンテナ余白X</span>
<span class="t" id="t105" style="top:761px;height:21px;line-height:21px;font-size:11.5px;color:#000;font-family:'DejaVu Sans','Noto Sans CJK JP',sans-serif;left:1064px;transform:scaleX(1.0928);transform-origin:0 50%;">10</span>
<svg class="r" style="left:1163px;top:762px;" width="14" height="14" viewBox="0 0 14 14"><circle cx="7" cy="7" r="7" fill="#a2a2a2"/><path d="M3.8 5.9L7 2.6L10.2 5.9ZM3.8 8.1L7 11.4L10.2 8.1Z" fill="#f5f0d7"/></svg>
<div class="r" style="left:833px;top:779px;width:347px;height:1px;background:#a2a2a2;"></div>
<span class="t" id="t106" style="top:782px;height:21px;line-height:21px;font-size:12px;color:#000;left:837px;transform:scaleX(0.8723);transform-origin:0 50%;">サブメニューコンテナ余白Y</span>
<span class="t" id="t107" style="top:782px;height:21px;line-height:21px;font-size:11.5px;color:#000;font-family:'DejaVu Sans','Noto Sans CJK JP',sans-serif;left:1064px;transform:scaleX(1.0235);transform-origin:0 50%;">0</span>
<svg class="r" style="left:1163px;top:783px;" width="14" height="14" viewBox="0 0 14 14"><circle cx="7" cy="7" r="7" fill="#a2a2a2"/><path d="M3.8 5.9L7 2.6L10.2 5.9ZM3.8 8.1L7 11.4L10.2 8.1Z" fill="#f5f0d7"/></svg>
<div class="r" style="left:833px;top:800px;width:347px;height:1px;background:#a2a2a2;"></div>
<span class="t" id="t108" style="top:803px;height:21px;line-height:21px;font-size:12px;color:#000;left:837px;transform:scaleX(1.0684);transform-origin:0 50%;">配置基準</span>
<span class="t" id="t109" style="top:803px;height:21px;line-height:21px;font-size:12px;color:#000;left:1064px;transform:scaleX(1.0410);transform-origin:0 50%;">左上</span>
<svg class="r" style="left:1163px;top:804.5px;" width="14" height="13" viewBox="0 0 14 13"><rect x="0" y="0" width="14" height="13" rx="1.6" fill="#a2a2a2"/><path d="M1.4 1.6H12.6L7 7.8Z" fill="#f5f0d7"/></svg>
<div class="r" style="left:833px;top:821px;width:347px;height:1px;background:#a2a2a2;"></div>
<span class="t" id="t110" style="top:824px;height:21px;line-height:21px;font-size:12px;color:#000;left:837px;transform:scaleX(1.0747);transform-origin:0 50%;">選択枠画像</span>
<span class="t" id="t111" style="top:824px;height:21px;line-height:21px;font-size:12px;color:#000;left:1064px;transform:scaleX(0.8245);transform-origin:0 50%;">なし</span>
<svg class="r" style="left:1163.6px;top:825.3px;" width="14" height="13" viewBox="0 0 14 13"><path d="M0.4 6.5H12M6.8 0.9L12.4 6.5L6.8 12.1" fill="none" stroke="#9a9a9a" stroke-width="1.7"/></svg>
<div class="r" style="left:833px;top:842px;width:347px;height:1px;background:#a2a2a2;"></div>
<div class="r" style="left:834px;top:843px;width:345px;height:20px;background:#e8e8e8;"></div>
<span class="t" id="t112" style="top:845px;height:21px;line-height:21px;font-size:12px;color:#a6a6a6;left:837px;transform:scaleX(1.0684);transform-origin:0 50%;">選択枠色</span>
<span class="t" id="t113" style="top:845px;height:21px;line-height:21px;font-size:11.5px;color:#a6a6a6;font-family:'DejaVu Sans','Noto Sans CJK JP',sans-serif;left:1064px;transform:scaleX(1.0393);transform-origin:0 50%;">FFFFFFFF</span>
<div class="r" style="left:833px;top:863px;width:347px;height:1px;background:#a2a2a2;"></div>
<div class="r" style="left:834px;top:864px;width:345px;height:20px;background:#e8e8e8;"></div>
<span class="t" id="t114" style="top:866px;height:21px;line-height:21px;font-size:12px;color:#a6a6a6;left:837px;transform:scaleX(1.0308);transform-origin:0 50%;">加算合成を利用</span>
<div class="r" style="left:1065px;top:866px;width:32px;height:15.5px;background:#6a6a6a;border-radius:8px;"></div><div class="r" style="left:1066.6px;top:867.6px;width:12.4px;height:12.4px;background:#cfcfcf;border-radius:50%;"></div>
<div class="r" style="left:833px;top:884px;width:347px;height:1px;background:#a2a2a2;"></div>
<div class="r" style="left:834px;top:885px;width:345px;height:20px;background:#e8e8e8;"></div>
<span class="t" id="t115" style="top:887px;height:21px;line-height:21px;font-size:12px;color:#a6a6a6;left:837px;transform:scaleX(1.0498);transform-origin:0 50%;">選択枠画像を点滅</span>
<div class="r" style="left:1065px;top:887px;width:32px;height:15.5px;background:#6a6a6a;border-radius:8px;"></div><div class="r" style="left:1066.6px;top:888.6px;width:12.4px;height:12.4px;background:#cfcfcf;border-radius:50%;"></div>
<div class="r" style="left:833px;top:905px;width:347px;height:1px;background:#a2a2a2;"></div>
<span class="t" id="t116" style="top:908px;height:21px;line-height:21px;font-size:12px;color:#000;left:837px;transform:scaleX(1.0747);transform-origin:0 50%;">背景用画像</span>
<span class="t" id="t117" style="top:908px;height:21px;line-height:21px;font-size:12px;color:#000;left:1064px;transform:scaleX(0.8245);transform-origin:0 50%;">なし</span>
<svg class="r" style="left:1163.6px;top:909.3px;" width="14" height="13" viewBox="0 0 14 13"><path d="M0.4 6.5H12M6.8 0.9L12.4 6.5L6.8 12.1" fill="none" stroke="#9a9a9a" stroke-width="1.7"/></svg>
<div class="r" style="left:833px;top:926px;width:347px;height:1px;background:#a2a2a2;"></div>
<div class="r" style="left:834px;top:927px;width:345px;height:20px;background:#e8e8e8;"></div>
<span class="t" id="t118" style="top:929px;height:21px;line-height:21px;font-size:12px;color:#a6a6a6;left:837px;transform:scaleX(1.0684);transform-origin:0 50%;">背景用色</span>
<span class="t" id="t119" style="top:929px;height:21px;line-height:21px;font-size:11.5px;color:#a6a6a6;font-family:'DejaVu Sans','Noto Sans CJK JP',sans-serif;left:1064px;transform:scaleX(1.0393);transform-origin:0 50%;">FFFFFFFF</span>
<div class="r" style="left:833px;top:947px;width:347px;height:1px;background:#a2a2a2;"></div>
<div class="r" style="left:834px;top:948px;width:345px;height:20px;background:#e8e8e8;"></div>
<span class="t" id="t120" style="top:950px;height:21px;line-height:21px;font-size:12px;color:#a6a6a6;left:837px;transform:scaleX(1.0308);transform-origin:0 50%;">加算合成を利用</span>
<div class="r" style="left:1065px;top:950px;width:32px;height:15.5px;background:#6a6a6a;border-radius:8px;"></div><div class="r" style="left:1066.6px;top:951.6px;width:12.4px;height:12.4px;background:#cfcfcf;border-radius:50%;"></div>
<div class="r" style="left:833px;top:968px;width:347px;height:1px;background:#a2a2a2;"></div>
<div class="r" style="left:836px;top:971px;width:341px;height:29px;background:#c48f00;"></div>
<svg class="r" style="left:840px;top:979px;" width="13" height="13" viewBox="0 0 13 13"><circle cx="6.5" cy="6.5" r="6.2" fill="#fff"/><path d="M3.3 5.2L6.5 8.6L9.7 5.2" fill="none" stroke="#c48f00" stroke-width="2"/></svg>
<span class="t" id="t121" style="top:972.3px;height:28px;line-height:28px;font-size:12.5px;color:#fff;left:857px;transform:scaleX(0.8776);transform-origin:0 50%;">カーソルの設定</span>
<div class="r" style="left:833px;top:1002px;width:347px;height:1px;background:#a2a2a2;"></div>
<div class="r" style="left:1060px;top:56px;width:1px;height:20px;background:#a2a2a2;"></div>
<div class="r" style="left:1060px;top:77px;width:1px;height:20px;background:#a2a2a2;"></div>
<div class="r" style="left:1060px;top:98px;width:1px;height:20px;background:#a2a2a2;"></div>
<div class="r" style="left:1060px;top:119px;width:1px;height:20px;background:#a2a2a2;"></div>
<div class="r" style="left:1060px;top:140px;width:1px;height:20px;background:#a2a2a2;"></div>
<div class="r" style="left:1060px;top:161px;width:1px;height:20px;background:#a2a2a2;"></div>
<div class="r" style="left:1060px;top:182px;width:1px;height:20px;background:#a2a2a2;"></div>
<div class="r" style="left:1060px;top:203px;width:1px;height:20px;background:#a2a2a2;"></div>
<div class="r" style="left:1060px;top:258px;width:1px;height:20px;background:#a2a2a2;"></div>
<div class="r" style="left:1060px;top:279px;width:1px;height:20px;background:#a2a2a2;"></div>
<div class="r" style="left:1060px;top:300px;width:1px;height:20px;background:#a2a2a2;"></div>
<div class="r" style="left:1060px;top:321px;width:1px;height:20px;background:#a2a2a2;"></div>
<div class="r" style="left:1060px;top:342px;width:1px;height:20px;background:#a2a2a2;"></div>
<div class="r" style="left:1060px;top:397px;width:1px;height:20px;background:#a2a2a2;"></div>
<div class="r" style="left:1060px;top:418px;width:1px;height:20px;background:#a2a2a2;"></div>
<div class="r" style="left:1060px;top:439px;width:1px;height:20px;background:#a2a2a2;"></div>
<div class="r" style="left:1060px;top:460px;width:1px;height:20px;background:#a2a2a2;"></div>
<div class="r" style="left:1060px;top:515px;width:1px;height:20px;background:#a2a2a2;"></div>
<div class="r" style="left:1060px;top:536px;width:1px;height:20px;background:#a2a2a2;"></div>
<div class="r" style="left:1060px;top:557px;width:1px;height:20px;background:#a2a2a2;"></div>
<div class="r" style="left:1060px;top:578px;width:1px;height:20px;background:#a2a2a2;"></div>
<div class="r" style="left:1060px;top:633px;width:1px;height:20px;background:#a2a2a2;"></div>
<div class="r" style="left:1060px;top:654px;width:1px;height:20px;background:#a2a2a2;"></div>
<div class="r" style="left:1060px;top:675px;width:1px;height:20px;background:#a2a2a2;"></div>
<div class="r" style="left:1060px;top:696px;width:1px;height:20px;background:#a2a2a2;"></div>
<div class="r" style="left:1060px;top:717px;width:1px;height:20px;background:#a2a2a2;"></div>
<div class="r" style="left:1060px;top:738px;width:1px;height:20px;background:#a2a2a2;"></div>
<div class="r" style="left:1060px;top:759px;width:1px;height:20px;background:#a2a2a2;"></div>
<div class="r" style="left:1060px;top:780px;width:1px;height:20px;background:#a2a2a2;"></div>
<div class="r" style="left:1060px;top:801px;width:1px;height:20px;background:#a2a2a2;"></div>
<div class="r" style="left:1060px;top:822px;width:1px;height:20px;background:#a2a2a2;"></div>
<div class="r" style="left:1060px;top:843px;width:1px;height:20px;background:#a2a2a2;"></div>
<div class="r" style="left:1060px;top:864px;width:1px;height:20px;background:#a2a2a2;"></div>
<div class="r" style="left:1060px;top:885px;width:1px;height:20px;background:#a2a2a2;"></div>
<div class="r" style="left:1060px;top:906px;width:1px;height:20px;background:#a2a2a2;"></div>
<div class="r" style="left:1060px;top:927px;width:1px;height:20px;background:#a2a2a2;"></div>
<div class="r" style="left:1060px;top:948px;width:1px;height:20px;background:#a2a2a2;"></div>
<div class="r" style="left:830px;top:339px;width:350px;height:28px;background:transparent;border:4px solid #d9000f;"></div>
<div class="r" style="left:830px;top:363px;width:350px;height:121px;background:transparent;border:4px solid #d9000f;"></div>
<div class="r" style="left:830px;top:599px;width:350px;height:374px;background:transparent;border:4px solid #d9000f;"></div>
<div class="r" style="left:1180px;top:21px;width:17px;height:978px;background:#f0f0f0;"></div>
<div class="r" style="left:1188px;top:38px;width:2px;height:692px;background:#808080;"></div>
</body></html>
